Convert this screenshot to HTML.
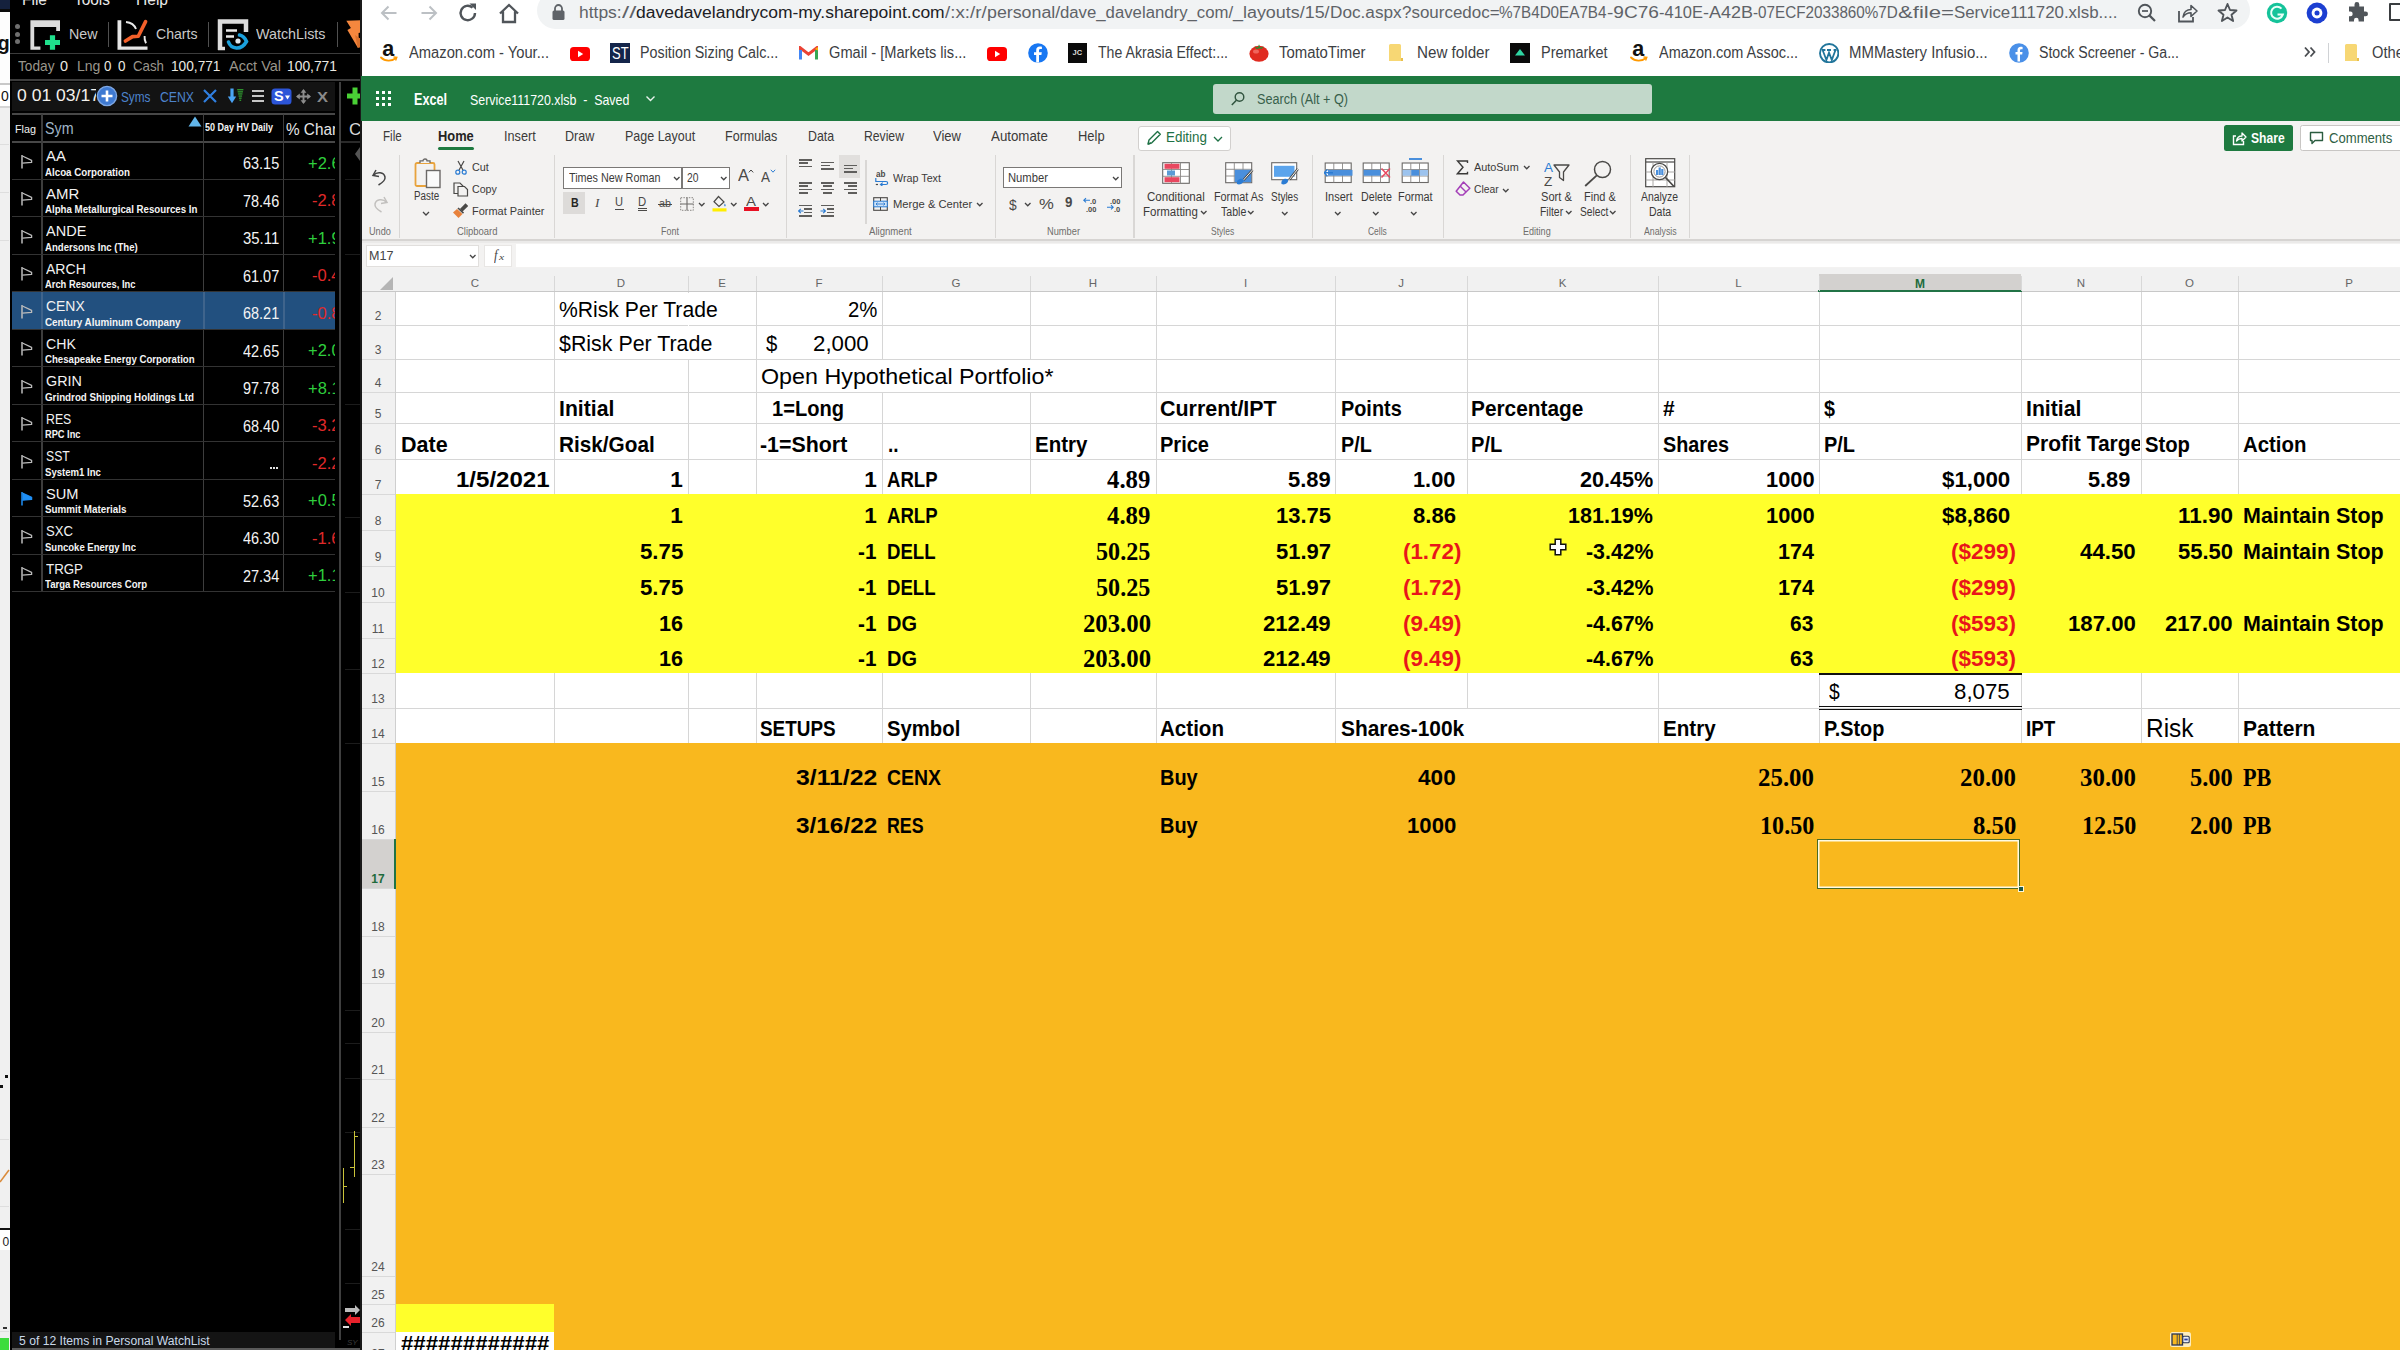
<!DOCTYPE html>
<html lang="en"><head><meta charset="utf-8"><title>Excel - Service111720.xlsb</title>
<style>
html,body{margin:0;padding:0;background:#fff}
#root{position:relative;width:2400px;height:1350px;overflow:hidden;background:#fff;font-family:"Liberation Sans",sans-serif}
#root div,#root svg,#root .t{position:absolute}
#root .t{white-space:pre;display:block;line-height:1;color:#000;font-family:"Liberation Sans",sans-serif}
#root .s{font-family:"Liberation Serif",serif}
</style></head><body><div id="root">
<div style="left:361px;top:268px;width:2039px;height:1082px;background:#fff;"></div>
<div style="left:396px;top:494px;width:2004px;height:179px;background:#ffff2b;"></div>
<div style="left:396px;top:743px;width:2004px;height:607px;background:#f9b81e;"></div>
<div style="left:396px;top:1304px;width:158px;height:28px;background:#ffff2b;"></div>
<div style="left:396px;top:1332px;width:158px;height:18px;background:#fff;"></div>
<div style="left:396px;top:325px;width:2004px;height:1px;background:#d6d6d6;"></div>
<div style="left:396px;top:359px;width:2004px;height:1px;background:#d6d6d6;"></div>
<div style="left:396px;top:392px;width:2004px;height:1px;background:#d6d6d6;"></div>
<div style="left:396px;top:423px;width:2004px;height:1px;background:#d6d6d6;"></div>
<div style="left:396px;top:459px;width:2004px;height:1px;background:#d6d6d6;"></div>
<div style="left:396px;top:708px;width:2004px;height:1px;background:#d6d6d6;"></div>
<div style="left:554px;top:292px;width:1px;height:202px;background:#d6d6d6;"></div>
<div style="left:554px;top:673px;width:1px;height:70px;background:#d6d6d6;"></div>
<div style="left:688px;top:292px;width:1px;height:202px;background:#d6d6d6;"></div>
<div style="left:688px;top:673px;width:1px;height:70px;background:#d6d6d6;"></div>
<div style="left:756px;top:292px;width:1px;height:202px;background:#d6d6d6;"></div>
<div style="left:756px;top:673px;width:1px;height:70px;background:#d6d6d6;"></div>
<div style="left:882px;top:292px;width:1px;height:202px;background:#d6d6d6;"></div>
<div style="left:882px;top:673px;width:1px;height:70px;background:#d6d6d6;"></div>
<div style="left:1030px;top:292px;width:1px;height:202px;background:#d6d6d6;"></div>
<div style="left:1030px;top:673px;width:1px;height:70px;background:#d6d6d6;"></div>
<div style="left:1156px;top:292px;width:1px;height:202px;background:#d6d6d6;"></div>
<div style="left:1156px;top:673px;width:1px;height:70px;background:#d6d6d6;"></div>
<div style="left:1335px;top:292px;width:1px;height:202px;background:#d6d6d6;"></div>
<div style="left:1335px;top:673px;width:1px;height:70px;background:#d6d6d6;"></div>
<div style="left:1467px;top:292px;width:1px;height:202px;background:#d6d6d6;"></div>
<div style="left:1467px;top:673px;width:1px;height:70px;background:#d6d6d6;"></div>
<div style="left:1658px;top:292px;width:1px;height:202px;background:#d6d6d6;"></div>
<div style="left:1658px;top:673px;width:1px;height:70px;background:#d6d6d6;"></div>
<div style="left:1819px;top:292px;width:1px;height:202px;background:#d6d6d6;"></div>
<div style="left:1819px;top:673px;width:1px;height:70px;background:#d6d6d6;"></div>
<div style="left:2021px;top:292px;width:1px;height:202px;background:#d6d6d6;"></div>
<div style="left:2021px;top:673px;width:1px;height:70px;background:#d6d6d6;"></div>
<div style="left:2141px;top:292px;width:1px;height:202px;background:#d6d6d6;"></div>
<div style="left:2141px;top:673px;width:1px;height:70px;background:#d6d6d6;"></div>
<div style="left:2238px;top:292px;width:1px;height:202px;background:#d6d6d6;"></div>
<div style="left:2238px;top:673px;width:1px;height:70px;background:#d6d6d6;"></div>
<div style="left:688px;top:293px;width:1px;height:66px;background:#fff;"></div>
<div style="left:882px;top:360px;width:1px;height:32px;background:#fff;"></div>
<div style="left:1030px;top:360px;width:1px;height:32px;background:#fff;"></div>
<div style="left:1467px;top:709px;width:1px;height:34px;background:#fff;"></div>
<div style="left:361px;top:268px;width:2039px;height:24px;background:#f1f1f1;"></div>
<div style="left:361px;top:291px;width:2039px;height:1px;background:#c8c8c8;"></div>
<div style="left:361px;top:292px;width:35px;height:1058px;background:#f1f1f1;"></div>
<div style="left:395px;top:292px;width:1px;height:1058px;background:#cfcfcf;"></div>
<div style="left:361px;top:325px;width:34px;height:1px;background:#d9d9d9;"></div>
<div style="left:361px;top:359px;width:34px;height:1px;background:#d9d9d9;"></div>
<div style="left:361px;top:392px;width:34px;height:1px;background:#d9d9d9;"></div>
<div style="left:361px;top:423px;width:34px;height:1px;background:#d9d9d9;"></div>
<div style="left:361px;top:459px;width:34px;height:1px;background:#d9d9d9;"></div>
<div style="left:361px;top:494px;width:34px;height:1px;background:#d9d9d9;"></div>
<div style="left:361px;top:530px;width:34px;height:1px;background:#d9d9d9;"></div>
<div style="left:361px;top:566px;width:34px;height:1px;background:#d9d9d9;"></div>
<div style="left:361px;top:602px;width:34px;height:1px;background:#d9d9d9;"></div>
<div style="left:361px;top:638px;width:34px;height:1px;background:#d9d9d9;"></div>
<div style="left:361px;top:673px;width:34px;height:1px;background:#d9d9d9;"></div>
<div style="left:361px;top:708px;width:34px;height:1px;background:#d9d9d9;"></div>
<div style="left:361px;top:743px;width:34px;height:1px;background:#d9d9d9;"></div>
<div style="left:361px;top:791px;width:34px;height:1px;background:#d9d9d9;"></div>
<div style="left:361px;top:839px;width:34px;height:1px;background:#d9d9d9;"></div>
<div style="left:361px;top:888px;width:34px;height:1px;background:#d9d9d9;"></div>
<div style="left:361px;top:936px;width:34px;height:1px;background:#d9d9d9;"></div>
<div style="left:361px;top:983px;width:34px;height:1px;background:#d9d9d9;"></div>
<div style="left:361px;top:1032px;width:34px;height:1px;background:#d9d9d9;"></div>
<div style="left:361px;top:1079px;width:34px;height:1px;background:#d9d9d9;"></div>
<div style="left:361px;top:1127px;width:34px;height:1px;background:#d9d9d9;"></div>
<div style="left:361px;top:1174px;width:34px;height:1px;background:#d9d9d9;"></div>
<div style="left:361px;top:1276px;width:34px;height:1px;background:#d9d9d9;"></div>
<div style="left:361px;top:1304px;width:34px;height:1px;background:#d9d9d9;"></div>
<div style="left:361px;top:1332px;width:34px;height:1px;background:#d9d9d9;"></div>
<div style="left:1819px;top:274px;width:202px;height:17px;background:#d3d1cf;"></div>
<div style="left:1818px;top:290px;width:204px;height:2px;background:#217346;"></div>
<div style="left:361px;top:840px;width:34px;height:48px;background:#d3d1cf;"></div>
<div style="left:394px;top:839px;width:2px;height:50px;background:#217346;"></div>
<div style="left:554px;top:276px;width:1px;height:15px;background:#d8d8d8;"></div>
<div style="left:688px;top:276px;width:1px;height:15px;background:#d8d8d8;"></div>
<div style="left:756px;top:276px;width:1px;height:15px;background:#d8d8d8;"></div>
<div style="left:882px;top:276px;width:1px;height:15px;background:#d8d8d8;"></div>
<div style="left:1030px;top:276px;width:1px;height:15px;background:#d8d8d8;"></div>
<div style="left:1156px;top:276px;width:1px;height:15px;background:#d8d8d8;"></div>
<div style="left:1335px;top:276px;width:1px;height:15px;background:#d8d8d8;"></div>
<div style="left:1467px;top:276px;width:1px;height:15px;background:#d8d8d8;"></div>
<div style="left:1658px;top:276px;width:1px;height:15px;background:#d8d8d8;"></div>
<div style="left:1819px;top:276px;width:1px;height:15px;background:#d8d8d8;"></div>
<div style="left:2021px;top:276px;width:1px;height:15px;background:#d8d8d8;"></div>
<div style="left:2141px;top:276px;width:1px;height:15px;background:#d8d8d8;"></div>
<div style="left:2238px;top:276px;width:1px;height:15px;background:#d8d8d8;"></div>
<svg style="left:378px;top:276px;" width="16" height="15" viewBox="0 0 16 15"><path d="M15 1 L15 14 L2 14 Z" fill="#b5b5b5"/></svg>
<span class="t" style="top:278.27px;font-size:11.5px;color:#666;left:-25.0px;width:1000px;text-align:center;">C</span>
<span class="t" style="top:278.27px;font-size:11.5px;color:#666;left:121.0px;width:1000px;text-align:center;">D</span>
<span class="t" style="top:278.27px;font-size:11.5px;color:#666;left:222.0px;width:1000px;text-align:center;">E</span>
<span class="t" style="top:278.27px;font-size:11.5px;color:#666;left:319.0px;width:1000px;text-align:center;">F</span>
<span class="t" style="top:278.27px;font-size:11.5px;color:#666;left:456.0px;width:1000px;text-align:center;">G</span>
<span class="t" style="top:278.27px;font-size:11.5px;color:#666;left:593.0px;width:1000px;text-align:center;">H</span>
<span class="t" style="top:278.27px;font-size:11.5px;color:#666;left:745.5px;width:1000px;text-align:center;">I</span>
<span class="t" style="top:278.27px;font-size:11.5px;color:#666;left:901.0px;width:1000px;text-align:center;">J</span>
<span class="t" style="top:278.27px;font-size:11.5px;color:#666;left:1062.5px;width:1000px;text-align:center;">K</span>
<span class="t" style="top:278.27px;font-size:11.5px;color:#666;left:1238.5px;width:1000px;text-align:center;">L</span>
<span class="t" style="top:277.84px;font-size:12px;font-weight:700;color:#1e6b3c;left:1420.0px;width:1000px;text-align:center;">M</span>
<span class="t" style="top:278.27px;font-size:11.5px;color:#666;left:1581.0px;width:1000px;text-align:center;">N</span>
<span class="t" style="top:278.27px;font-size:11.5px;color:#666;left:1689.5px;width:1000px;text-align:center;">O</span>
<span class="t" style="top:278.27px;font-size:11.5px;color:#666;left:1849.0px;width:1000px;text-align:center;">P</span>
<span class="t" style="top:309.84px;font-size:12px;color:#555;left:-122px;width:1000px;text-align:center;">2</span>
<span class="t" style="top:343.84px;font-size:12px;color:#555;left:-122px;width:1000px;text-align:center;">3</span>
<span class="t" style="top:376.84px;font-size:12px;color:#555;left:-122px;width:1000px;text-align:center;">4</span>
<span class="t" style="top:407.84px;font-size:12px;color:#555;left:-122px;width:1000px;text-align:center;">5</span>
<span class="t" style="top:443.84px;font-size:12px;color:#555;left:-122px;width:1000px;text-align:center;">6</span>
<span class="t" style="top:478.84px;font-size:12px;color:#555;left:-122px;width:1000px;text-align:center;">7</span>
<span class="t" style="top:514.84px;font-size:12px;color:#555;left:-122px;width:1000px;text-align:center;">8</span>
<span class="t" style="top:550.84px;font-size:12px;color:#555;left:-122px;width:1000px;text-align:center;">9</span>
<span class="t" style="top:586.84px;font-size:12px;color:#555;left:-122px;width:1000px;text-align:center;">10</span>
<span class="t" style="top:622.84px;font-size:12px;color:#555;left:-122px;width:1000px;text-align:center;">11</span>
<span class="t" style="top:657.84px;font-size:12px;color:#555;left:-122px;width:1000px;text-align:center;">12</span>
<span class="t" style="top:692.84px;font-size:12px;color:#555;left:-122px;width:1000px;text-align:center;">13</span>
<span class="t" style="top:727.84px;font-size:12px;color:#555;left:-122px;width:1000px;text-align:center;">14</span>
<span class="t" style="top:775.84px;font-size:12px;color:#555;left:-122px;width:1000px;text-align:center;">15</span>
<span class="t" style="top:823.84px;font-size:12px;color:#555;left:-122px;width:1000px;text-align:center;">16</span>
<span class="t" style="top:872.84px;font-size:12px;font-weight:700;color:#1e6b3c;left:-122px;width:1000px;text-align:center;">17</span>
<span class="t" style="top:920.84px;font-size:12px;color:#555;left:-122px;width:1000px;text-align:center;">18</span>
<span class="t" style="top:967.84px;font-size:12px;color:#555;left:-122px;width:1000px;text-align:center;">19</span>
<span class="t" style="top:1016.84px;font-size:12px;color:#555;left:-122px;width:1000px;text-align:center;">20</span>
<span class="t" style="top:1063.84px;font-size:12px;color:#555;left:-122px;width:1000px;text-align:center;">21</span>
<span class="t" style="top:1111.84px;font-size:12px;color:#555;left:-122px;width:1000px;text-align:center;">22</span>
<span class="t" style="top:1158.84px;font-size:12px;color:#555;left:-122px;width:1000px;text-align:center;">23</span>
<span class="t" style="top:1260.84px;font-size:12px;color:#555;left:-122px;width:1000px;text-align:center;">24</span>
<span class="t" style="top:1288.84px;font-size:12px;color:#555;left:-122px;width:1000px;text-align:center;">25</span>
<span class="t" style="top:1316.84px;font-size:12px;color:#555;left:-122px;width:1000px;text-align:center;">26</span>
<span class="t" style="top:1347.84px;font-size:12px;color:#555;left:-122px;width:1000px;text-align:center;">27</span>
<div style="left:1819px;top:673px;width:203px;height:2px;background:#111;"></div>
<div style="left:1819px;top:706px;width:203px;height:1px;background:#111;"></div>
<div style="left:1819px;top:709px;width:203px;height:1px;background:#111;"></div>
<div style="left:1817.3px;top:838.6px;width:203.2px;height:50.2px;border:1.5px solid #4a6b25;box-sizing:border-box;box-shadow:inset 0 0 0 1.5px #fffbe4"></div>
<div style="left:2017.8px;top:885.8px;width:6px;height:6px;background:#1e5a4a;border:1.2px solid #fff6d8;box-sizing:border-box"></div>
<svg style="left:2169px;top:1331px;" width="23" height="17" viewBox="0 0 23 17"><rect x="1" y="1" width="21" height="15" rx="2.5" fill="#fdf3d0" opacity="0.9"/><rect x="3" y="3" width="10.5" height="11" fill="#f9b81e" stroke="#2b3550" stroke-width="1.3"/><path d="M8.2 3 V14 M10.4 3 V14" stroke="#2b3550" stroke-width="0.8"/><rect x="13.8" y="5.2" width="6.4" height="6.6" rx="1" fill="#e9edf7" stroke="#2b3550" stroke-width="1.1"/><rect x="15.3" y="7.6" width="3.4" height="1.8" fill="#2b3ea0"/></svg>
<svg style="left:1549px;top:538px;" width="18" height="18" viewBox="0 0 18 18"><path d="M6.2 1.2 H11.8 V6.2 H16.8 V11.8 H11.8 V16.8 H6.2 V11.8 H1.2 V6.2 H6.2 Z" fill="#fff" stroke="#111" stroke-width="1.5" stroke-linejoin="miter"/></svg>
<span class="t" style="top:298.77px;font-size:22.6px;left:559.0px;transform:scaleX(0.936);transform-origin:0 0;">%Risk Per Trade</span>
<span class="t" style="top:298.77px;font-size:22.6px;left:848.3px;transform:scaleX(0.9003);transform-origin:0 0;">2%</span>
<span class="t" style="top:333.27px;font-size:22.6px;left:559.0px;transform:scaleX(0.9462);transform-origin:0 0;">$Risk Per Trade</span>
<span class="t" style="top:333.27px;font-size:22.6px;left:766.0px;transform:scaleX(0.8993);transform-origin:0 0;">$</span>
<span class="t" style="top:333.27px;font-size:22.6px;left:813.3px;transform:scaleX(0.9851);transform-origin:0 0;">2,000</span>
<span class="t" style="top:366.27px;font-size:22.6px;left:760.7px;transform:scaleX(1.0306);transform-origin:0 0;">Open Hypothetical Portfolio*</span>
<span class="t" style="top:398.27px;font-size:22.6px;font-weight:700;left:559.0px;transform:scaleX(0.9372);transform-origin:0 0;">Initial</span>
<span class="t" style="top:398.27px;font-size:22.6px;font-weight:700;left:772.3px;transform:scaleX(0.8889);transform-origin:0 0;">1=Long</span>
<span class="t" style="top:398.27px;font-size:22.6px;font-weight:700;left:1160.0px;transform:scaleX(0.9483);transform-origin:0 0;">Current/IPT</span>
<span class="t" style="top:398.27px;font-size:22.6px;font-weight:700;left:1341.0px;transform:scaleX(0.8789);transform-origin:0 0;">Points</span>
<span class="t" style="top:398.27px;font-size:22.6px;font-weight:700;left:1471.0px;transform:scaleX(0.9216);transform-origin:0 0;">Percentage</span>
<span class="t" style="top:398.27px;font-size:22.6px;font-weight:700;left:1663.3px;transform:scaleX(0.9311);transform-origin:0 0;">#</span>
<span class="t" style="top:398.27px;font-size:22.6px;font-weight:700;left:1824.0px;transform:scaleX(0.8754);transform-origin:0 0;">$</span>
<span class="t" style="top:398.27px;font-size:22.6px;font-weight:700;left:2025.7px;transform:scaleX(0.9372);transform-origin:0 0;">Initial</span>
<span class="t" style="top:434.27px;font-size:22.6px;font-weight:700;left:400.7px;transform:scaleX(0.9511);transform-origin:0 0;">Date</span>
<span class="t" style="top:434.27px;font-size:22.6px;font-weight:700;left:559.0px;transform:scaleX(0.918);transform-origin:0 0;">Risk/Goal</span>
<span class="t" style="top:434.27px;font-size:22.6px;font-weight:700;left:760.0px;transform:scaleX(0.9458);transform-origin:0 0;">-1=Short</span>
<span class="t" style="top:434.27px;font-size:22.6px;font-weight:700;left:887.7px;transform:scaleX(0.8436);transform-origin:0 0;">..</span>
<span class="t" style="top:434.27px;font-size:22.6px;font-weight:700;left:1035.3px;transform:scaleX(0.9071);transform-origin:0 0;">Entry</span>
<span class="t" style="top:434.27px;font-size:22.6px;font-weight:700;left:1160.0px;transform:scaleX(0.8864);transform-origin:0 0;">Price</span>
<span class="t" style="top:434.27px;font-size:22.6px;font-weight:700;left:1341.0px;transform:scaleX(0.873);transform-origin:0 0;">P/L</span>
<span class="t" style="top:434.27px;font-size:22.6px;font-weight:700;left:1471.0px;transform:scaleX(0.8901);transform-origin:0 0;">P/L</span>
<span class="t" style="top:434.27px;font-size:22.6px;font-weight:700;left:1663.3px;transform:scaleX(0.8757);transform-origin:0 0;">Shares</span>
<span class="t" style="top:434.27px;font-size:22.6px;font-weight:700;left:1824.0px;transform:scaleX(0.8815);transform-origin:0 0;">P/L</span>
<div style="left:2022px;top:425px;width:118px;height:34px;overflow:hidden">
<span class="t" style="top:8.37px;font-size:22.6px;font-weight:700;left:3.7px;transform:scaleX(0.9293);transform-origin:0 0;">Profit Target</span>
</div>
<span class="t" style="top:434.27px;font-size:22.6px;font-weight:700;left:2145.0px;transform:scaleX(0.8961);transform-origin:0 0;">Stop</span>
<span class="t" style="top:434.27px;font-size:22.6px;font-weight:700;left:2243.3px;transform:scaleX(0.9017);transform-origin:0 0;">Action</span>
<span class="t" style="top:469.27px;font-size:22.6px;font-weight:700;left:455.7px;transform:scaleX(1.0639);transform-origin:0 0;">1/5/2021</span>
<span class="t" style="top:469.27px;font-size:22.6px;font-weight:700;left:670.13px;">1</span>
<span class="t" style="top:469.27px;font-size:22.6px;font-weight:700;left:864.13px;">1</span>
<span class="t" style="top:469.27px;font-size:22.6px;font-weight:700;left:886.7px;transform:scaleX(0.8225);transform-origin:0 0;">ARLP</span>
<span class="t s" style="top:467.46px;font-size:25px;font-weight:700;left:1107.3px;transform:scaleX(0.992);transform-origin:0 0;">4.89</span>
<span class="t" style="top:469.27px;font-size:22.6px;font-weight:700;left:1288.3px;transform:scaleX(0.9709);transform-origin:0 0;">5.89</span>
<span class="t" style="top:469.27px;font-size:22.6px;font-weight:700;left:1413.3px;transform:scaleX(0.9641);transform-origin:0 0;">1.00</span>
<span class="t" style="top:469.27px;font-size:22.6px;font-weight:700;left:1580.0px;transform:scaleX(0.9562);transform-origin:0 0;">20.45%</span>
<span class="t" style="top:469.27px;font-size:22.6px;font-weight:700;left:1765.7px;transform:scaleX(0.9665);transform-origin:0 0;">1000</span>
<span class="t" style="top:469.27px;font-size:22.6px;font-weight:700;left:1941.7px;transform:scaleX(0.9879);transform-origin:0 0;">$1,000</span>
<span class="t" style="top:469.27px;font-size:22.6px;font-weight:700;left:2087.7px;transform:scaleX(0.9618);transform-origin:0 0;">5.89</span>
<span class="t" style="top:505.27px;font-size:22.6px;font-weight:700;left:670.13px;">1</span>
<span class="t" style="top:505.27px;font-size:22.6px;font-weight:700;left:864.13px;">1</span>
<span class="t" style="top:505.27px;font-size:22.6px;font-weight:700;left:886.7px;transform:scaleX(0.8225);transform-origin:0 0;">ARLP</span>
<span class="t s" style="top:503.46px;font-size:25px;font-weight:700;left:1107.3px;transform:scaleX(0.992);transform-origin:0 0;">4.89</span>
<span class="t" style="top:505.27px;font-size:22.6px;font-weight:700;left:1276.0px;transform:scaleX(0.9727);transform-origin:0 0;">13.75</span>
<span class="t" style="top:505.27px;font-size:22.6px;font-weight:700;left:1412.7px;transform:scaleX(0.9777);transform-origin:0 0;">8.86</span>
<span class="t" style="top:505.27px;font-size:22.6px;font-weight:700;left:1568.3px;transform:scaleX(0.9526);transform-origin:0 0;">181.19%</span>
<span class="t" style="top:505.27px;font-size:22.6px;font-weight:700;left:1765.7px;transform:scaleX(0.9665);transform-origin:0 0;">1000</span>
<span class="t" style="top:505.27px;font-size:22.6px;font-weight:700;left:1941.7px;transform:scaleX(0.9879);transform-origin:0 0;">$8,860</span>
<span class="t" style="top:505.27px;font-size:22.6px;font-weight:700;left:2177.7px;transform:scaleX(0.9945);transform-origin:0 0;">11.90</span>
<span class="t" style="top:505.27px;font-size:22.6px;font-weight:700;left:2243.3px;transform:scaleX(0.9498);transform-origin:0 0;">Maintain Stop</span>
<span class="t" style="top:541.27px;font-size:22.6px;font-weight:700;left:640.0px;transform:scaleX(0.9845);transform-origin:0 0;">5.75</span>
<span class="t" style="top:541.27px;font-size:22.6px;font-weight:700;left:858.3px;transform:scaleX(0.9158);transform-origin:0 0;">-1</span>
<span class="t" style="top:541.27px;font-size:22.6px;font-weight:700;left:886.7px;transform:scaleX(0.8236);transform-origin:0 0;">DELL</span>
<span class="t s" style="top:539.46px;font-size:25px;font-weight:700;left:1095.7px;transform:scaleX(0.9653);transform-origin:0 0;">50.25</span>
<span class="t" style="top:541.27px;font-size:22.6px;font-weight:700;left:1276.0px;transform:scaleX(0.9727);transform-origin:0 0;">51.97</span>
<span class="t" style="top:541.27px;font-size:22.6px;font-weight:700;color:#e8161a;left:1403.3px;transform:scaleX(0.9893);transform-origin:0 0;">(1.72)</span>
<span class="t" style="top:541.27px;font-size:22.6px;font-weight:700;left:1585.7px;transform:scaleX(0.9442);transform-origin:0 0;">-3.42%</span>
<span class="t" style="top:541.27px;font-size:22.6px;font-weight:700;left:1778.3px;transform:scaleX(0.955);transform-origin:0 0;">174</span>
<span class="t" style="top:541.27px;font-size:22.6px;font-weight:700;color:#e8161a;left:1950.7px;transform:scaleX(0.9948);transform-origin:0 0;">($299)</span>
<span class="t" style="top:577.27px;font-size:22.6px;font-weight:700;left:640.0px;transform:scaleX(0.9845);transform-origin:0 0;">5.75</span>
<span class="t" style="top:577.27px;font-size:22.6px;font-weight:700;left:858.3px;transform:scaleX(0.9158);transform-origin:0 0;">-1</span>
<span class="t" style="top:577.27px;font-size:22.6px;font-weight:700;left:886.7px;transform:scaleX(0.8236);transform-origin:0 0;">DELL</span>
<span class="t s" style="top:575.46px;font-size:25px;font-weight:700;left:1095.7px;transform:scaleX(0.9653);transform-origin:0 0;">50.25</span>
<span class="t" style="top:577.27px;font-size:22.6px;font-weight:700;left:1276.0px;transform:scaleX(0.9727);transform-origin:0 0;">51.97</span>
<span class="t" style="top:577.27px;font-size:22.6px;font-weight:700;color:#e8161a;left:1403.3px;transform:scaleX(0.9893);transform-origin:0 0;">(1.72)</span>
<span class="t" style="top:577.27px;font-size:22.6px;font-weight:700;left:1585.7px;transform:scaleX(0.9442);transform-origin:0 0;">-3.42%</span>
<span class="t" style="top:577.27px;font-size:22.6px;font-weight:700;left:1778.3px;transform:scaleX(0.955);transform-origin:0 0;">174</span>
<span class="t" style="top:577.27px;font-size:22.6px;font-weight:700;color:#e8161a;left:1950.7px;transform:scaleX(0.9948);transform-origin:0 0;">($299)</span>
<span class="t" style="top:541.27px;font-size:22.6px;font-weight:700;left:2080.0px;transform:scaleX(0.9851);transform-origin:0 0;">44.50</span>
<span class="t" style="top:541.27px;font-size:22.6px;font-weight:700;left:2177.7px;transform:scaleX(0.9727);transform-origin:0 0;">55.50</span>
<span class="t" style="top:541.27px;font-size:22.6px;font-weight:700;left:2243.3px;transform:scaleX(0.9498);transform-origin:0 0;">Maintain Stop</span>
<span class="t" style="top:613.27px;font-size:22.6px;font-weight:700;left:659.3px;transform:scaleX(0.955);transform-origin:0 0;">16</span>
<span class="t" style="top:613.27px;font-size:22.6px;font-weight:700;left:858.3px;transform:scaleX(0.9158);transform-origin:0 0;">-1</span>
<span class="t" style="top:613.27px;font-size:22.6px;font-weight:700;left:886.7px;transform:scaleX(0.885);transform-origin:0 0;">DG</span>
<span class="t s" style="top:611.46px;font-size:25px;font-weight:700;left:1082.7px;transform:scaleX(0.9891);transform-origin:0 0;">203.00</span>
<span class="t" style="top:613.27px;font-size:22.6px;font-weight:700;left:1263.3px;transform:scaleX(0.9793);transform-origin:0 0;">212.49</span>
<span class="t" style="top:613.27px;font-size:22.6px;font-weight:700;color:#e8161a;left:1403.3px;transform:scaleX(0.9893);transform-origin:0 0;">(9.49)</span>
<span class="t" style="top:613.27px;font-size:22.6px;font-weight:700;left:1585.7px;transform:scaleX(0.9442);transform-origin:0 0;">-4.67%</span>
<span class="t" style="top:613.27px;font-size:22.6px;font-weight:700;left:1790.0px;transform:scaleX(0.9271);transform-origin:0 0;">63</span>
<span class="t" style="top:613.27px;font-size:22.6px;font-weight:700;color:#e8161a;left:1950.7px;transform:scaleX(0.9948);transform-origin:0 0;">($593)</span>
<span class="t" style="top:648.27px;font-size:22.6px;font-weight:700;left:659.3px;transform:scaleX(0.955);transform-origin:0 0;">16</span>
<span class="t" style="top:648.27px;font-size:22.6px;font-weight:700;left:858.3px;transform:scaleX(0.9158);transform-origin:0 0;">-1</span>
<span class="t" style="top:648.27px;font-size:22.6px;font-weight:700;left:886.7px;transform:scaleX(0.885);transform-origin:0 0;">DG</span>
<span class="t s" style="top:646.46px;font-size:25px;font-weight:700;left:1082.7px;transform:scaleX(0.9891);transform-origin:0 0;">203.00</span>
<span class="t" style="top:648.27px;font-size:22.6px;font-weight:700;left:1263.3px;transform:scaleX(0.9793);transform-origin:0 0;">212.49</span>
<span class="t" style="top:648.27px;font-size:22.6px;font-weight:700;color:#e8161a;left:1403.3px;transform:scaleX(0.9893);transform-origin:0 0;">(9.49)</span>
<span class="t" style="top:648.27px;font-size:22.6px;font-weight:700;left:1585.7px;transform:scaleX(0.9442);transform-origin:0 0;">-4.67%</span>
<span class="t" style="top:648.27px;font-size:22.6px;font-weight:700;left:1790.0px;transform:scaleX(0.9271);transform-origin:0 0;">63</span>
<span class="t" style="top:648.27px;font-size:22.6px;font-weight:700;color:#e8161a;left:1950.7px;transform:scaleX(0.9948);transform-origin:0 0;">($593)</span>
<span class="t" style="top:613.27px;font-size:22.6px;font-weight:700;left:2067.7px;transform:scaleX(0.9836);transform-origin:0 0;">187.00</span>
<span class="t" style="top:613.27px;font-size:22.6px;font-weight:700;left:2165.0px;transform:scaleX(0.9793);transform-origin:0 0;">217.00</span>
<span class="t" style="top:613.27px;font-size:22.6px;font-weight:700;left:2243.3px;transform:scaleX(0.9498);transform-origin:0 0;">Maintain Stop</span>
<span class="t" style="top:681.27px;font-size:22.6px;left:1829.3px;transform:scaleX(0.8515);transform-origin:0 0;">$</span>
<span class="t" style="top:681.27px;font-size:22.6px;left:1954.3px;transform:scaleX(0.9851);transform-origin:0 0;">8,075</span>
<span class="t" style="top:718.27px;font-size:22.6px;font-weight:700;left:760.0px;transform:scaleX(0.8372);transform-origin:0 0;">SETUPS</span>
<span class="t" style="top:718.27px;font-size:22.6px;font-weight:700;left:886.7px;transform:scaleX(0.8979);transform-origin:0 0;">Symbol</span>
<span class="t" style="top:718.27px;font-size:22.6px;font-weight:700;left:1160.0px;transform:scaleX(0.9103);transform-origin:0 0;">Action</span>
<span class="t" style="top:718.27px;font-size:22.6px;font-weight:700;left:1340.7px;transform:scaleX(0.9255);transform-origin:0 0;">Shares-100k</span>
<span class="t" style="top:718.27px;font-size:22.6px;font-weight:700;left:1663.3px;transform:scaleX(0.9123);transform-origin:0 0;">Entry</span>
<span class="t" style="top:718.27px;font-size:22.6px;font-weight:700;left:1824.0px;transform:scaleX(0.8783);transform-origin:0 0;">P.Stop</span>
<span class="t" style="top:718.27px;font-size:22.6px;font-weight:700;left:2025.7px;transform:scaleX(0.8332);transform-origin:0 0;">IPT</span>
<span class="t" style="top:715.39px;font-size:26px;left:2145.7px;transform:scaleX(0.9408);transform-origin:0 0;">Risk</span>
<span class="t" style="top:718.27px;font-size:22.6px;font-weight:700;left:2243.3px;transform:scaleX(0.9299);transform-origin:0 0;">Pattern</span>
<span class="t" style="top:767.27px;font-size:22.6px;font-weight:700;left:796.0px;transform:scaleX(1.0964);transform-origin:0 0;">3/11/22</span>
<span class="t" style="top:767.27px;font-size:22.6px;font-weight:700;left:886.7px;transform:scaleX(0.8601);transform-origin:0 0;">CENX</span>
<span class="t" style="top:767.27px;font-size:22.6px;font-weight:700;left:1160.0px;transform:scaleX(0.8831);transform-origin:0 0;">Buy</span>
<span class="t" style="top:767.27px;font-size:22.6px;font-weight:700;left:1418.3px;transform:scaleX(1.0001);transform-origin:0 0;">400</span>
<span class="t s" style="top:765.46px;font-size:25px;font-weight:700;left:1758.3px;transform:scaleX(0.9956);transform-origin:0 0;">25.00</span>
<span class="t s" style="top:765.46px;font-size:25px;font-weight:700;left:1960.0px;transform:scaleX(0.9956);transform-origin:0 0;">20.00</span>
<span class="t s" style="top:765.46px;font-size:25px;font-weight:700;left:2080.0px;transform:scaleX(0.9956);transform-origin:0 0;">30.00</span>
<span class="t s" style="top:765.46px;font-size:25px;font-weight:700;left:2190.0px;transform:scaleX(0.976);transform-origin:0 0;">5.00</span>
<span class="t s" style="top:765.46px;font-size:25px;font-weight:700;left:2243.3px;transform:scaleX(0.8889);transform-origin:0 0;">PB</span>
<span class="t" style="top:814.77px;font-size:22.6px;font-weight:700;left:796.0px;transform:scaleX(1.0783);transform-origin:0 0;">3/16/22</span>
<span class="t" style="top:814.77px;font-size:22.6px;font-weight:700;left:886.7px;transform:scaleX(0.7877);transform-origin:0 0;">RES</span>
<span class="t" style="top:814.77px;font-size:22.6px;font-weight:700;left:1160.0px;transform:scaleX(0.8831);transform-origin:0 0;">Buy</span>
<span class="t" style="top:814.77px;font-size:22.6px;font-weight:700;left:1406.7px;transform:scaleX(0.9804);transform-origin:0 0;">1000</span>
<span class="t s" style="top:812.96px;font-size:25px;font-weight:700;left:1760.0px;transform:scaleX(0.9653);transform-origin:0 0;">10.50</span>
<span class="t s" style="top:812.96px;font-size:25px;font-weight:700;left:1972.7px;transform:scaleX(0.9897);transform-origin:0 0;">8.50</span>
<span class="t s" style="top:812.96px;font-size:25px;font-weight:700;left:2081.7px;transform:scaleX(0.9653);transform-origin:0 0;">12.50</span>
<span class="t s" style="top:812.96px;font-size:25px;font-weight:700;left:2190.0px;transform:scaleX(0.976);transform-origin:0 0;">2.00</span>
<span class="t s" style="top:812.96px;font-size:25px;font-weight:700;left:2243.3px;transform:scaleX(0.8889);transform-origin:0 0;">PB</span>
<div style="left:396px;top:1333px;width:158px;height:17px;overflow:hidden">
<span class="t" style="top:-0.13px;font-size:22.6px;font-weight:700;left:4.5px;transform:scaleX(0.9845);transform-origin:0 0;">############</span>
</div>
<div style="left:0px;top:0px;width:10px;height:1350px;background:#f0f0f0;"></div>
<div style="left:0px;top:0px;width:10px;height:9px;background:#15213d;"></div>
<div style="left:0px;top:9px;width:10px;height:3px;background:#0b0b0b;"></div>
<div style="left:0px;top:12px;width:10px;height:71px;background:#fdfdfd;"></div>
<div style="left:0px;top:83px;width:10px;height:2px;background:#c9c9c9;"></div>
<div style="left:0px;top:85px;width:10px;height:21px;background:#fff;"></div>
<div style="left:0px;top:106px;width:10px;height:2px;background:#d5d5d5;"></div>
<div style="left:0;top:0;width:10px;height:1350px;overflow:hidden">
<span class="t" style="top:33.37px;font-size:20px;font-weight:700;color:#111;left:-2.5px;">g</span>
<span class="t" style="top:89.15px;font-size:14px;color:#111;left:1px;">0</span>
<div style="left:0px;top:1228px;width:10px;height:2px;background:#111;"></div>
<div style="left:0px;top:1230px;width:10px;height:20px;background:#fff;"></div>
<span class="t" style="top:1235.84px;font-size:12px;color:#222;left:2.5px;">0</span>
<div style="left:5px;top:1075px;width:3px;height:3px;background:#111;"></div>
<div style="left:0px;top:1085px;width:3px;height:3px;background:#111;"></div>
<div style="left:3px;top:1327px;width:4px;height:2px;background:#333;"></div>
<div style="left:0px;top:1338px;width:9px;height:12px;background:#3ddc3d;"></div>
</div>
<svg style="left:0px;top:1165px;" width="10" height="22" viewBox="0 0 10 22"><path d="M0 17 L9 5" stroke="#d98a3a" stroke-width="1.6" fill="none"/></svg>
<div style="left:0px;top:144px;width:9px;height:1px;background:#dedede;"></div>
<div style="left:0px;top:192px;width:9px;height:1px;background:#dedede;"></div>
<div style="left:0px;top:240px;width:9px;height:1px;background:#dedede;"></div>
<div style="left:0px;top:1139px;width:9px;height:1px;background:#dedede;"></div>
<div style="left:0px;top:1206px;width:9px;height:1px;background:#dedede;"></div>
<div style="left:0px;top:1331px;width:9px;height:1px;background:#dedede;"></div>
<div style="left:10px;top:0px;width:351px;height:1350px;background:#000;"></div>
<div style="left:10px;top:0;width:351px;height:14px;overflow:hidden">
<span class="t" style="top:-8.04px;font-size:16px;color:#e9e9e9;left:12.0px;transform:scaleX(0.9699);transform-origin:0 0;">File</span>
<span class="t" style="top:-8.04px;font-size:16px;color:#e9e9e9;left:64.0px;transform:scaleX(0.964);transform-origin:0 0;">Tools</span>
<span class="t" style="top:-8.04px;font-size:16px;color:#e9e9e9;left:126.0px;transform:scaleX(0.9723);transform-origin:0 0;">Help</span>
</div>
<div style="left:14.5px;top:24.4px;width:5px;height:5px;border-radius:3px;background:#6f6f6f"></div>
<div style="left:14.5px;top:31.9px;width:5px;height:5px;border-radius:3px;background:#6f6f6f"></div>
<div style="left:14.5px;top:39.4px;width:5px;height:5px;border-radius:3px;background:#6f6f6f"></div>
<svg style="left:29px;top:19px;" width="34" height="34" viewBox="0 0 34 34"><path d="M1.4 1.3 H31 V12 H27.2 V7.9 H5.2 V27.5 H11.4 V30.8 H1.4 Z" fill="#dcdcdc"/><path d="M23.5 16.3 V30.8 M16 23.5 H31" stroke="#1fe08c" stroke-width="5.2"/></svg>
<span class="t" style="top:27.34px;font-size:14.6px;color:#c9c9c9;left:68.5px;transform:scaleX(0.9746);transform-origin:0 0;">New</span>
<div style="left:107.7px;top:21.5px;width:1.3px;height:25.5px;background:#505050;"></div>
<svg style="left:115px;top:18px;" width="36" height="34" viewBox="0 0 36 34"><path d="M2.5 2.3 H6.3 V28.5 H32.5 V31.8 H2.5 Z" fill="#e6e6e6"/><path d="M11 4 C15.5 4.5 19.5 7 21 11" stroke="#e8e8e8" stroke-width="1.9" fill="none"/><path d="M29.6 18 C29.3 21 29.8 23 31 25.2" stroke="#e8e8e8" stroke-width="1.9" fill="none"/><path d="M10.4 23 L17.5 18.6 L23.3 18.2 L30.6 3.6" stroke="#f4602a" stroke-width="3.6" fill="none" stroke-linejoin="round" stroke-linecap="round"/></svg>
<span class="t" style="top:27.34px;font-size:14.6px;color:#c9c9c9;left:155.5px;transform:scaleX(0.9652);transform-origin:0 0;">Charts</span>
<div style="left:207.7px;top:21.5px;width:1.3px;height:25.5px;background:#505050;"></div>
<svg style="left:216px;top:18px;" width="36" height="34" viewBox="0 0 36 34"><path d="M4 32 V3.5 H30 V14" stroke="#dcdcdc" stroke-width="4.5" fill="none"/><path d="M2 30.5 H9" stroke="#dcdcdc" stroke-width="3.5"/><path d="M10 12.5 H21 M10 18.5 H18" stroke="#e8e8e8" stroke-width="2.6"/><path d="M12.5 24 C15 31 25 33 30.5 23.5 C29 20 26 17.5 23.5 17" stroke="#1aa0dc" stroke-width="3.6" fill="none" stroke-linecap="round"/><circle cx="22" cy="23" r="2.6" fill="#dfe9f0"/></svg>
<span class="t" style="top:27.34px;font-size:14.6px;color:#c9c9c9;left:255.5px;transform:scaleX(0.9809);transform-origin:0 0;">WatchLists</span>
<div style="left:336.7px;top:21.5px;width:1.3px;height:25.5px;background:#505050;"></div>
<svg style="left:343px;top:18px;" width="18" height="34" viewBox="0 0 18 34"><path d="M3.3 2.7 L17.6 2.3 V14.5 L15.6 15 V20 L17.6 20.4 V29 L14.8 29.7 L4.4 11.9 L7.9 9.9 Z" fill="#f5873e"/><path d="M12 17 L17.6 21 V29 L14.8 29.7 Z" fill="#d9702c"/></svg>
<div style="left:10px;top:52.5px;width:351px;height:1.5px;background:#3c3c3c;"></div>
<span class="t" style="top:59.17px;font-size:14.8px;color:#9a968c;left:18.2px;transform:scaleX(0.9244);transform-origin:0 0;">Today</span>
<span class="t" style="top:59.17px;font-size:14.8px;color:#ebe9e2;left:59.8px;transform:scaleX(0.9722);transform-origin:0 0;">0</span>
<span class="t" style="top:59.17px;font-size:14.8px;color:#9a968c;left:76.6px;transform:scaleX(0.9479);transform-origin:0 0;">Lng</span>
<span class="t" style="top:59.17px;font-size:14.8px;color:#ebe9e2;left:103.6px;transform:scaleX(0.8993);transform-origin:0 0;">0</span>
<span class="t" style="top:59.17px;font-size:14.8px;color:#ebe9e2;left:117.5px;transform:scaleX(0.9114);transform-origin:0 0;">0</span>
<span class="t" style="top:59.17px;font-size:14.8px;color:#9a968c;left:133.0px;transform:scaleX(0.8974);transform-origin:0 0;">Cash</span>
<span class="t" style="top:59.17px;font-size:14.8px;color:#ebe9e2;left:171.0px;transform:scaleX(0.9252);transform-origin:0 0;">100,771</span>
<span class="t" style="top:59.17px;font-size:14.8px;color:#9a968c;left:229.0px;transform:scaleX(0.9776);transform-origin:0 0;">Acct Val</span>
<span class="t" style="top:59.17px;font-size:14.8px;color:#ebe9e2;left:287.0px;transform:scaleX(0.9345);transform-origin:0 0;">100,771</span>
<div style="left:10px;top:79px;width:351px;height:1.5px;background:#3c3c3c;"></div>
<div style="left:12px;top:82px;width:323px;height:29px;background:#131313;"></div>
<div style="left:12px;top:82px;width:84px;height:29px;overflow:hidden">
<span class="t" style="top:5.17px;font-size:17.4px;color:#f3f1ec;left:5.0px;transform:scaleX(1.0091);transform-origin:0 0;">0 01 03/17</span>
</div>
<svg style="left:96px;top:85px;" width="22" height="22" viewBox="0 0 22 22"><circle cx="11" cy="11" r="9.6" fill="#3f7ad2" stroke="#7fa8e4" stroke-width="1.4"/><path d="M11 5.5 V16.5 M5.5 11 H16.5" stroke="#fff" stroke-width="2.6"/></svg>
<span class="t" style="top:88.60px;font-size:15px;color:#4d83cc;left:120.5px;transform:scaleX(0.7867);transform-origin:0 0;">Syms</span>
<span class="t" style="top:88.60px;font-size:15px;color:#4d83cc;left:160.0px;transform:scaleX(0.8159);transform-origin:0 0;">CENX</span>
<svg style="left:202px;top:88px;" width="16" height="16" viewBox="0 0 16 16"><path d="M2 2 L14 14 M14 2 L2 14" stroke="#2f7fe0" stroke-width="2.2"/></svg>
<svg style="left:227px;top:87px;" width="18" height="18" viewBox="0 0 18 18"><path d="M5 1.5 V11" stroke="#4aa3f5" stroke-width="3.2"/><path d="M0.8 9.5 L5 16.2 L9.2 9.5 Z" fill="#4aa3f5"/><rect x="10.20" y="2.20" width="6.20" height="1.1" fill="#35b035"/><rect x="10.65" y="4.30" width="5.30" height="1.1" fill="#35b035"/><rect x="11.10" y="6.40" width="4.40" height="1.1" fill="#35b035"/><rect x="11.55" y="8.50" width="3.50" height="1.1" fill="#35b035"/><rect x="12.00" y="10.60" width="2.60" height="1.1" fill="#35b035"/><rect x="12.45" y="12.70" width="1.70" height="1.1" fill="#35b035"/></svg>
<div style="left:251.7px;top:90.2px;width:12.2px;height:2px;background:#c6c6c6;"></div>
<div style="left:251.7px;top:94.9px;width:12.2px;height:2px;background:#c6c6c6;"></div>
<div style="left:251.7px;top:99.5px;width:12.2px;height:2px;background:#c6c6c6;"></div>
<svg style="left:271px;top:88px;" width="21" height="17" viewBox="0 0 21 17"><rect x="0.5" y="0.5" width="20" height="16" rx="3.5" fill="#2c55d8"/><path d="M14 7.5 H19 L16.5 11.5 Z" fill="#fff"/></svg>
<span class="t" style="top:89.03px;font-size:14.5px;font-weight:700;color:#fff;left:274px;">S</span>
<svg style="left:296px;top:89px;" width="15" height="15" viewBox="0 0 15 15"><path d="M7.5 1.5 V13.5 M1.5 7.5 H13.5" stroke="#8d8d8d" stroke-width="1.9"/><path d="M7.5 0 L4.6 3.8 H10.4 Z M7.5 15 L4.6 11.2 H10.4 Z M0 7.5 L3.8 4.6 V10.4 Z M15 7.5 L11.2 4.6 V10.4 Z" fill="#8d8d8d"/></svg>
<span class="t" style="top:89.36px;font-size:15.4px;font-weight:700;color:#8a8a8a;left:316.8px;transform:scaleX(1.0709);transform-origin:0 0;">X</span>
<svg style="left:347px;top:87px;" width="14" height="18" viewBox="0 0 14 18"><path d="M8 0.5 V17.5 M0 9 H14" stroke="#49d035" stroke-width="5"/></svg>
<div style="left:339px;top:82px;width:1.5px;height:1258px;background:#3f3f3f;"></div>
<div style="left:12px;top:113px;width:323px;height:1.5px;background:#474747;"></div>
<div style="left:12px;top:141px;width:323px;height:1.5px;background:#474747;"></div>
<span class="t" style="top:123.77px;font-size:11.5px;color:#f0f0f0;left:14.5px;transform:scaleX(0.9389);transform-origin:0 0;">Flag</span>
<span class="t" style="top:119.91px;font-size:17px;color:#9fb4c6;left:44.5px;transform:scaleX(0.8382);transform-origin:0 0;">Sym</span>
<svg style="left:188px;top:116px;" width="14" height="11" viewBox="0 0 14 11"><path d="M7 0.5 L13.5 10.5 H0.5 Z" fill="#62b6ea"/></svg>
<span class="t" style="top:122.33px;font-size:10.6px;font-weight:700;color:#f4f4f4;left:205.0px;transform:scaleX(0.8486);transform-origin:0 0;">50 Day HV Daily</span>
<div style="left:283px;top:114px;width:52px;height:27px;overflow:hidden">
<span class="t" style="top:6.61px;font-size:17px;color:#e6e6e6;left:3.0px;transform:scaleX(0.901);transform-origin:0 0;">% Chan</span>
</div>
<div style="left:41.2px;top:114px;width:1.4px;height:478px;background:#3d3d3d;"></div>
<div style="left:203px;top:114px;width:1.4px;height:478px;background:#3d3d3d;"></div>
<div style="left:283px;top:114px;width:1.4px;height:478px;background:#3d3d3d;"></div>
<svg style="left:20px;top:153.7px;" width="14" height="16" viewBox="0 0 14 16"><path d="M2 1 V14.5" stroke="#bcbcbc" stroke-width="1.5" fill="none"/><path d="M2.4 2 L11.6 6.3 V8.4 L2.4 9.2" stroke="#bcbcbc" stroke-width="1.3" fill="none" stroke-linejoin="round"/></svg>
<span class="t" style="top:148.40px;font-size:15px;color:#f2f2f2;left:45.5px;transform:scaleX(0.9895);transform-origin:0 0;">AA</span>
<span class="t" style="top:166.53px;font-size:11.3px;font-weight:700;color:#f4f4f4;left:45.3px;transform:scaleX(0.8623);transform-origin:0 0;">Alcoa Corporation</span>
<span class="t" style="top:156.03px;font-size:15.8px;color:#f4f4f4;left:243.3px;transform:scaleX(0.9157);transform-origin:0 0;">63.15</span>
<div style="left:300px;top:149.7px;width:35px;height:26px;overflow:hidden">
<span class="t" style="top:5.03px;font-size:16.5px;color:#2fcf3d;left:8.0px;">+2.68%</span>
</div>
<div style="left:12px;top:178.7px;width:323px;height:1.3px;background:#333;"></div>
<svg style="left:20px;top:191.2px;" width="14" height="16" viewBox="0 0 14 16"><path d="M2 1 V14.5" stroke="#bcbcbc" stroke-width="1.5" fill="none"/><path d="M2.4 2 L11.6 6.3 V8.4 L2.4 9.2" stroke="#bcbcbc" stroke-width="1.3" fill="none" stroke-linejoin="round"/></svg>
<span class="t" style="top:185.90px;font-size:15px;color:#f2f2f2;left:45.5px;transform:scaleX(0.9961);transform-origin:0 0;">AMR</span>
<span class="t" style="top:204.03px;font-size:11.3px;font-weight:700;color:#f4f4f4;left:45.3px;transform:scaleX(0.8581);transform-origin:0 0;">Alpha Metallurgical Resources In</span>
<span class="t" style="top:193.53px;font-size:15.8px;color:#f4f4f4;left:243.3px;transform:scaleX(0.9157);transform-origin:0 0;">78.46</span>
<div style="left:300px;top:187.2px;width:35px;height:26px;overflow:hidden">
<span class="t" style="top:5.03px;font-size:16.5px;color:#e02a2a;left:12.0px;">-2.88%</span>
</div>
<div style="left:12px;top:216.2px;width:323px;height:1.3px;background:#333;"></div>
<svg style="left:20px;top:228.7px;" width="14" height="16" viewBox="0 0 14 16"><path d="M2 1 V14.5" stroke="#bcbcbc" stroke-width="1.5" fill="none"/><path d="M2.4 2 L11.6 6.3 V8.4 L2.4 9.2" stroke="#bcbcbc" stroke-width="1.3" fill="none" stroke-linejoin="round"/></svg>
<span class="t" style="top:223.40px;font-size:15px;color:#f2f2f2;left:45.5px;transform:scaleX(0.9671);transform-origin:0 0;">ANDE</span>
<span class="t" style="top:241.53px;font-size:11.3px;font-weight:700;color:#f4f4f4;left:45.3px;transform:scaleX(0.8485);transform-origin:0 0;">Andersons Inc (The)</span>
<span class="t" style="top:231.03px;font-size:15.8px;color:#f4f4f4;left:243.3px;transform:scaleX(0.9436);transform-origin:0 0;">35.11</span>
<div style="left:300px;top:224.7px;width:35px;height:26px;overflow:hidden">
<span class="t" style="top:5.03px;font-size:16.5px;color:#2fcf3d;left:8.0px;">+1.98%</span>
</div>
<div style="left:12px;top:253.7px;width:323px;height:1.3px;background:#333;"></div>
<svg style="left:20px;top:266.2px;" width="14" height="16" viewBox="0 0 14 16"><path d="M2 1 V14.5" stroke="#bcbcbc" stroke-width="1.5" fill="none"/><path d="M2.4 2 L11.6 6.3 V8.4 L2.4 9.2" stroke="#bcbcbc" stroke-width="1.3" fill="none" stroke-linejoin="round"/></svg>
<span class="t" style="top:260.90px;font-size:15px;color:#f2f2f2;left:45.5px;transform:scaleX(0.9363);transform-origin:0 0;">ARCH</span>
<span class="t" style="top:279.03px;font-size:11.3px;font-weight:700;color:#f4f4f4;left:45.3px;transform:scaleX(0.8282);transform-origin:0 0;">Arch Resources, Inc</span>
<span class="t" style="top:268.53px;font-size:15.8px;color:#f4f4f4;left:243.3px;transform:scaleX(0.9157);transform-origin:0 0;">61.07</span>
<div style="left:300px;top:262.2px;width:35px;height:26px;overflow:hidden">
<span class="t" style="top:5.03px;font-size:16.5px;color:#e02a2a;left:12.0px;">-0.48%</span>
</div>
<div style="left:12px;top:292.2px;width:323px;height:37px;background:#22507f;"></div>
<div style="left:12px;top:291.2px;width:323px;height:1.3px;background:#333;"></div>
<div style="left:41px;top:291.7px;width:1.5px;height:37.5px;background:#3f648c;"></div>
<div style="left:203px;top:291.7px;width:1.5px;height:37.5px;background:#3f648c;"></div>
<div style="left:283px;top:291.7px;width:1.5px;height:37.5px;background:#3f648c;"></div>
<svg style="left:20px;top:303.7px;" width="14" height="16" viewBox="0 0 14 16"><path d="M2 1 V14.5" stroke="#bcbcbc" stroke-width="1.5" fill="none"/><path d="M2.4 2 L11.6 6.3 V8.4 L2.4 9.2" stroke="#bcbcbc" stroke-width="1.3" fill="none" stroke-linejoin="round"/></svg>
<span class="t" style="top:298.40px;font-size:15px;color:#f2f2f2;left:45.5px;transform:scaleX(0.9287);transform-origin:0 0;">CENX</span>
<span class="t" style="top:316.53px;font-size:11.3px;font-weight:700;color:#f4f4f4;left:45.3px;transform:scaleX(0.8726);transform-origin:0 0;">Century Aluminum Company</span>
<span class="t" style="top:306.03px;font-size:15.8px;color:#f4f4f4;left:243.3px;transform:scaleX(0.9157);transform-origin:0 0;">68.21</span>
<div style="left:300px;top:299.7px;width:35px;height:26px;overflow:hidden">
<span class="t" style="top:5.03px;font-size:16.5px;color:#e02a2a;left:12.0px;">-0.88%</span>
</div>
<div style="left:12px;top:328.7px;width:323px;height:1.3px;background:#333;"></div>
<svg style="left:20px;top:341.2px;" width="14" height="16" viewBox="0 0 14 16"><path d="M2 1 V14.5" stroke="#bcbcbc" stroke-width="1.5" fill="none"/><path d="M2.4 2 L11.6 6.3 V8.4 L2.4 9.2" stroke="#bcbcbc" stroke-width="1.3" fill="none" stroke-linejoin="round"/></svg>
<span class="t" style="top:335.90px;font-size:15px;color:#f2f2f2;left:45.5px;transform:scaleX(0.9411);transform-origin:0 0;">CHK</span>
<span class="t" style="top:354.03px;font-size:11.3px;font-weight:700;color:#f4f4f4;left:45.3px;transform:scaleX(0.8545);transform-origin:0 0;">Chesapeake Energy Corporation</span>
<span class="t" style="top:343.53px;font-size:15.8px;color:#f4f4f4;left:243.3px;transform:scaleX(0.9157);transform-origin:0 0;">42.65</span>
<div style="left:300px;top:337.2px;width:35px;height:26px;overflow:hidden">
<span class="t" style="top:5.03px;font-size:16.5px;color:#2fcf3d;left:8.0px;">+2.08%</span>
</div>
<div style="left:12px;top:366.2px;width:323px;height:1.3px;background:#333;"></div>
<svg style="left:20px;top:378.7px;" width="14" height="16" viewBox="0 0 14 16"><path d="M2 1 V14.5" stroke="#bcbcbc" stroke-width="1.5" fill="none"/><path d="M2.4 2 L11.6 6.3 V8.4 L2.4 9.2" stroke="#bcbcbc" stroke-width="1.3" fill="none" stroke-linejoin="round"/></svg>
<span class="t" style="top:373.40px;font-size:15px;color:#f2f2f2;left:45.5px;transform:scaleX(0.9547);transform-origin:0 0;">GRIN</span>
<span class="t" style="top:391.53px;font-size:11.3px;font-weight:700;color:#f4f4f4;left:45.3px;transform:scaleX(0.8658);transform-origin:0 0;">Grindrod Shipping Holdings Ltd</span>
<span class="t" style="top:381.03px;font-size:15.8px;color:#f4f4f4;left:243.3px;transform:scaleX(0.9157);transform-origin:0 0;">97.78</span>
<div style="left:300px;top:374.7px;width:35px;height:26px;overflow:hidden">
<span class="t" style="top:5.03px;font-size:16.5px;color:#2fcf3d;left:8.0px;">+8.18%</span>
</div>
<div style="left:12px;top:403.7px;width:323px;height:1.3px;background:#333;"></div>
<svg style="left:20px;top:416.2px;" width="14" height="16" viewBox="0 0 14 16"><path d="M2 1 V14.5" stroke="#bcbcbc" stroke-width="1.5" fill="none"/><path d="M2.4 2 L11.6 6.3 V8.4 L2.4 9.2" stroke="#bcbcbc" stroke-width="1.3" fill="none" stroke-linejoin="round"/></svg>
<span class="t" style="top:410.90px;font-size:15px;color:#f2f2f2;left:45.5px;transform:scaleX(0.8204);transform-origin:0 0;">RES</span>
<span class="t" style="top:429.03px;font-size:11.3px;font-weight:700;color:#f4f4f4;left:45.3px;transform:scaleX(0.8194);transform-origin:0 0;">RPC Inc</span>
<span class="t" style="top:418.53px;font-size:15.8px;color:#f4f4f4;left:243.3px;transform:scaleX(0.9157);transform-origin:0 0;">68.40</span>
<div style="left:300px;top:412.2px;width:35px;height:26px;overflow:hidden">
<span class="t" style="top:5.03px;font-size:16.5px;color:#e02a2a;left:12.0px;">-3.28%</span>
</div>
<div style="left:12px;top:441.2px;width:323px;height:1.3px;background:#333;"></div>
<svg style="left:20px;top:453.7px;" width="14" height="16" viewBox="0 0 14 16"><path d="M2 1 V14.5" stroke="#bcbcbc" stroke-width="1.5" fill="none"/><path d="M2.4 2 L11.6 6.3 V8.4 L2.4 9.2" stroke="#bcbcbc" stroke-width="1.3" fill="none" stroke-linejoin="round"/></svg>
<span class="t" style="top:448.40px;font-size:15px;color:#f2f2f2;left:45.5px;transform:scaleX(0.8123);transform-origin:0 0;">SST</span>
<span class="t" style="top:466.53px;font-size:11.3px;font-weight:700;color:#f4f4f4;left:45.3px;transform:scaleX(0.8477);transform-origin:0 0;">System1 Inc</span>
<div style="left:269.7px;top:466.7px;width:2.2px;height:2.2px;background:#e0e0e0;"></div>
<div style="left:273.0px;top:466.7px;width:2.2px;height:2.2px;background:#e0e0e0;"></div>
<div style="left:276.3px;top:466.7px;width:2.2px;height:2.2px;background:#e0e0e0;"></div>
<div style="left:300px;top:449.7px;width:35px;height:26px;overflow:hidden">
<span class="t" style="top:5.03px;font-size:16.5px;color:#e02a2a;left:12.0px;">-2.28%</span>
</div>
<div style="left:12px;top:478.7px;width:323px;height:1.3px;background:#333;"></div>
<svg style="left:20px;top:491.2px;" width="14" height="16" viewBox="0 0 14 16"><path d="M2 1 V14.5" stroke="#1f8ff5" stroke-width="1.5" fill="none"/><path d="M2.4 2 L11.6 6.3 V8.4 L2.4 9.2" stroke="#1f8ff5" stroke-width="1.3" fill="#1f8ff5" stroke-linejoin="round"/></svg>
<span class="t" style="top:485.90px;font-size:15px;color:#f2f2f2;left:45.5px;transform:scaleX(0.9751);transform-origin:0 0;">SUM</span>
<span class="t" style="top:504.03px;font-size:11.3px;font-weight:700;color:#f4f4f4;left:45.3px;transform:scaleX(0.87);transform-origin:0 0;">Summit Materials</span>
<span class="t" style="top:493.53px;font-size:15.8px;color:#f4f4f4;left:243.3px;transform:scaleX(0.9157);transform-origin:0 0;">52.63</span>
<div style="left:300px;top:487.2px;width:35px;height:26px;overflow:hidden">
<span class="t" style="top:5.03px;font-size:16.5px;color:#2fcf3d;left:8.0px;">+0.58%</span>
</div>
<div style="left:12px;top:516.2px;width:323px;height:1.3px;background:#333;"></div>
<svg style="left:20px;top:528.7px;" width="14" height="16" viewBox="0 0 14 16"><path d="M2 1 V14.5" stroke="#bcbcbc" stroke-width="1.5" fill="none"/><path d="M2.4 2 L11.6 6.3 V8.4 L2.4 9.2" stroke="#bcbcbc" stroke-width="1.3" fill="none" stroke-linejoin="round"/></svg>
<span class="t" style="top:523.40px;font-size:15px;color:#f2f2f2;left:45.5px;transform:scaleX(0.8755);transform-origin:0 0;">SXC</span>
<span class="t" style="top:541.53px;font-size:11.3px;font-weight:700;color:#f4f4f4;left:45.3px;transform:scaleX(0.8425);transform-origin:0 0;">Suncoke Energy Inc</span>
<span class="t" style="top:531.03px;font-size:15.8px;color:#f4f4f4;left:243.3px;transform:scaleX(0.9157);transform-origin:0 0;">46.30</span>
<div style="left:300px;top:524.7px;width:35px;height:26px;overflow:hidden">
<span class="t" style="top:5.03px;font-size:16.5px;color:#e02a2a;left:12.0px;">-1.68%</span>
</div>
<div style="left:12px;top:553.7px;width:323px;height:1.3px;background:#333;"></div>
<svg style="left:20px;top:566.2px;" width="14" height="16" viewBox="0 0 14 16"><path d="M2 1 V14.5" stroke="#bcbcbc" stroke-width="1.5" fill="none"/><path d="M2.4 2 L11.6 6.3 V8.4 L2.4 9.2" stroke="#bcbcbc" stroke-width="1.3" fill="none" stroke-linejoin="round"/></svg>
<span class="t" style="top:560.90px;font-size:15px;color:#f2f2f2;left:45.5px;transform:scaleX(0.8879);transform-origin:0 0;">TRGP</span>
<span class="t" style="top:579.03px;font-size:11.3px;font-weight:700;color:#f4f4f4;left:45.3px;transform:scaleX(0.8491);transform-origin:0 0;">Targa Resources Corp</span>
<span class="t" style="top:568.53px;font-size:15.8px;color:#f4f4f4;left:243.3px;transform:scaleX(0.9157);transform-origin:0 0;">27.34</span>
<div style="left:300px;top:562.2px;width:35px;height:26px;overflow:hidden">
<span class="t" style="top:5.03px;font-size:16.5px;color:#2fcf3d;left:8.0px;">+1.18%</span>
</div>
<div style="left:12px;top:591.2px;width:323px;height:1.3px;background:#333;"></div>
<div style="left:341px;top:110px;width:20px;height:40px;overflow:hidden">
<span class="t" style="top:10.61px;font-size:17px;color:#d8d8d8;left:8px;">C</span>
</div>
<div style="left:341px;top:141px;width:20px;height:1.5px;background:#2a2a2a;"></div>
<svg style="left:352px;top:146px;" width="9" height="16" viewBox="0 0 9 16"><path d="M8 1 L3 8 L8 15 Z" fill="#555"/></svg>
<div style="left:345px;top:179px;width:16px;height:1.3px;background:#1c1c1c;"></div>
<div style="left:345px;top:254px;width:16px;height:1.3px;background:#1c1c1c;"></div>
<div style="left:345px;top:404px;width:16px;height:1.3px;background:#1c1c1c;"></div>
<div style="left:345px;top:517px;width:16px;height:1.3px;background:#1c1c1c;"></div>
<div style="left:345px;top:592px;width:16px;height:1.3px;background:#1c1c1c;"></div>
<div style="left:345px;top:669px;width:16px;height:1.3px;background:#1c1c1c;"></div>
<div style="left:345px;top:743px;width:16px;height:1.3px;background:#1c1c1c;"></div>
<div style="left:345px;top:1010px;width:16px;height:1.3px;background:#1c1c1c;"></div>
<div style="left:345px;top:1043px;width:16px;height:1.3px;background:#1c1c1c;"></div>
<div style="left:345px;top:1078px;width:16px;height:1.3px;background:#1c1c1c;"></div>
<div style="left:345px;top:1132px;width:16px;height:1.3px;background:#1c1c1c;"></div>
<div style="left:345px;top:1229px;width:16px;height:1.3px;background:#1c1c1c;"></div>
<div style="left:345px;top:1283px;width:16px;height:1.3px;background:#1c1c1c;"></div>
<div style="left:343px;top:1168px;width:1.4px;height:35px;background:#c9c23a;"></div>
<div style="left:343px;top:1186px;width:4px;height:1.4px;background:#c9c23a;"></div>
<div style="left:354px;top:1131px;width:1.4px;height:46px;background:#c9c23a;"></div>
<div style="left:354px;top:1136px;width:4px;height:1.4px;background:#c9c23a;"></div>
<div style="left:350px;top:1167px;width:4px;height:1.4px;background:#c9c23a;"></div>
<svg style="left:344px;top:1304px;" width="17" height="26" viewBox="0 0 17 26"><path d="M1 4 H11 V1 L16 6 L11 11 V8 H1 Z" fill="#bdbdbd"/><path d="M16 13 H7 V10 L1 16 L7 22 V19 H16 Z" fill="#e8222b"/></svg>
<div style="left:343px;top:1326px;width:6px;height:1.5px;background:#ddd;"></div>
<span class="t" style="top:1339.23px;font-size:8px;font-style:italic;color:#3a3a3a;left:347px;">SY</span>
<div style="left:12px;top:1332px;width:323px;height:16px;background:#141414;"></div>
<span class="t" style="top:1334.59px;font-size:12.3px;color:#c9d9ea;left:19.3px;transform:scaleX(0.988);transform-origin:0 0;">5 of 12 Items in Personal WatchList</span>
<div style="left:12px;top:1347.5px;width:349px;height:2.5px;background:#5a5a5a;"></div>
<div style="left:361px;top:0px;width:2039px;height:76px;background:#fff;"></div>
<div style="left:360px;top:0px;width:1.5px;height:1350px;background:#1a1a1a;"></div>
<svg style="left:379px;top:3px;" width="20" height="20" viewBox="0 0 20 20"><path d="M17.5 10 H3.5 M9.5 3.5 L3 10 L9.5 16.5" stroke="#bcc0c4" stroke-width="2" fill="none"/></svg>
<svg style="left:419px;top:3px;" width="20" height="20" viewBox="0 0 20 20"><path d="M2.5 10 H16.5 M10.5 3.5 L17 10 L10.5 16.5" stroke="#bcc0c4" stroke-width="2" fill="none"/></svg>
<svg style="left:457px;top:2px;" width="22" height="22" viewBox="0 0 22 22"><path d="M18 11 A7.2 7.2 0 1 1 15.6 5.6" stroke="#50555a" stroke-width="2.4" fill="none"/><path d="M12.5 1.5 H19 V8 Z" fill="#50555a"/></svg>
<svg style="left:497px;top:1px;" width="24" height="24" viewBox="0 0 24 24"><path d="M3 12.5 L12 4 L21 12.5 M6 10.5 V21 H18 V10.5" stroke="#50555a" stroke-width="2.3" fill="none" stroke-linejoin="miter"/></svg>
<div style="left:537px;top:-8px;width:1713px;height:37px;border-radius:18.5px;background:#f1f3f4"></div>
<svg style="left:551px;top:3px;" width="15" height="18" viewBox="0 0 15 18"><rect x="1.5" y="7.5" width="12" height="9.5" rx="1.5" fill="#5f6368"/><path d="M4 8 V5.5 A3.5 3.5 0 0 1 11 5.5 V8" stroke="#5f6368" stroke-width="1.8" fill="none"/></svg>
<span class="t" style="top:4.36px;font-size:17.3px;color:#5f6368;left:579px;transform:scaleX(1.0092);transform-origin:0 0;">https:</span>
<span class="t" style="top:4.36px;font-size:17.3px;color:#5f6368;left:621.7px;transform:scaleX(1.4876);transform-origin:0 0;">//</span>
<span class="t" style="top:4.36px;font-size:17.3px;color:#202124;left:636px;transform:scaleX(1.0116);transform-origin:0 0;">davedavelandrycom-my.sharepoint.com</span>
<span class="t" style="top:4.36px;font-size:17.3px;color:#5f6368;left:945px;transform:scaleX(1.0847);transform-origin:0 0;">/:x:/r/</span>
<span class="t" style="top:4.36px;font-size:17.3px;color:#5f6368;left:986.7px;transform:scaleX(1.0299);transform-origin:0 0;">personal/</span>
<span class="t" style="top:4.36px;font-size:17.3px;color:#5f6368;left:1060px;transform:scaleX(0.9688);transform-origin:0 0;">dave_davelandry_com/</span>
<span class="t" style="top:4.36px;font-size:17.3px;color:#5f6368;left:1233.3px;transform:scaleX(1.0365);transform-origin:0 0;">_layouts/15/</span>
<span class="t" style="top:4.36px;font-size:17.3px;color:#5f6368;left:1330px;transform:scaleX(0.9943);transform-origin:0 0;">Doc.aspx</span>
<span class="t" style="top:4.36px;font-size:17.3px;color:#5f6368;left:1401.7px;transform:scaleX(0.9815);transform-origin:0 0;">?sourcedoc=</span>
<span class="t" style="top:4.36px;font-size:17.3px;color:#5f6368;left:1499.4px;transform:scaleX(0.881);transform-origin:0 0;">%7B4D0EA7B4</span>
<span class="t" style="top:4.36px;font-size:17.3px;color:#5f6368;left:1607px;transform:scaleX(1.1036);transform-origin:0 0;">-9C76</span>
<span class="t" style="top:4.36px;font-size:17.3px;color:#5f6368;left:1659px;transform:scaleX(0.9531);transform-origin:0 0;">-410E</span>
<span class="t" style="top:4.36px;font-size:17.3px;color:#5f6368;left:1703px;transform:scaleX(1.0399);transform-origin:0 0;">-A42B</span>
<span class="t" style="top:4.36px;font-size:17.3px;color:#5f6368;left:1753px;transform:scaleX(0.8817);transform-origin:0 0;">-07ECF2033860%7D</span>
<span class="t" style="top:4.36px;font-size:17.3px;color:#5f6368;left:1898px;transform:scaleX(1.2798);transform-origin:0 0;">&amp;file=</span>
<span class="t" style="top:4.36px;font-size:17.3px;color:#5f6368;left:1954px;transform:scaleX(0.9753);transform-origin:0 0;">Service111720.xlsb....</span>
<svg style="left:2136px;top:2px;" width="22" height="22" viewBox="0 0 22 22"><circle cx="9" cy="9" r="6.2" stroke="#50555a" stroke-width="1.9" fill="none"/><path d="M13.6 13.6 L19 19" stroke="#50555a" stroke-width="2.2"/><path d="M6 9 H12" stroke="#50555a" stroke-width="1.7"/></svg>
<svg style="left:2176px;top:2px;" width="23" height="22" viewBox="0 0 23 22"><path d="M3 9 V19.5 H17 V15" stroke="#50555a" stroke-width="1.8" fill="none"/><path d="M7 15 C7.5 10 11 7.5 15 7.5 V3.5 L21 9 L15 14.5 V10.8 C11.5 10.8 9 12 7 15 Z" stroke="#50555a" stroke-width="1.6" fill="none" stroke-linejoin="round"/></svg>
<svg style="left:2216px;top:1px;" width="23" height="23" viewBox="0 0 23 23"><path d="M11.5 3 L14 9 L20.5 9.5 L15.5 13.7 L17.1 20 L11.5 16.5 L5.9 20 L7.5 13.7 L2.5 9.5 L9 9 Z" stroke="#50555a" stroke-width="1.9" fill="none" stroke-linejoin="round"/></svg>
<svg style="left:2266px;top:2px;" width="22" height="22" viewBox="0 0 22 22"><circle cx="11" cy="11" r="10.2" fill="#15c39a"/><path d="M15.5 6.6 A6 6 0 1 0 16.8 12.6 H11.5" stroke="#e9fff8" stroke-width="2" fill="none"/></svg>
<svg style="left:2306px;top:2px;" width="22" height="22" viewBox="0 0 22 22"><circle cx="11" cy="11" r="10.4" fill="#1c3fd1"/><circle cx="11" cy="11" r="5.4" fill="#fff"/><circle cx="11" cy="11" r="2.5" fill="#1c3fd1"/></svg>
<svg style="left:2345px;top:1px;" width="24" height="24" viewBox="0 0 24 24"><path d="M9.5 3.5 a2.4 2.4 0 0 1 4.8 0 V5.5 H19 V10.5 h1.6 a2.4 2.4 0 0 1 0 4.8 H19 V20.5 H13.6 V19 a2.3 2.3 0 0 0 -4.6 0 V20.5 H4 V15.3 h1.3 a2.4 2.4 0 0 0 0 -4.8 H4 V5.5 H9.5 Z" fill="#50555a"/></svg>
<div style="left:2389px;top:3px;width:20px;height:18px;border:2.5px solid #3a3d40;box-sizing:border-box;border-radius:1px"></div>
<div style="left:380px;top:44px;width:18px;height:18px">
<span class="t" style="top:-5.00px;font-size:21.5px;font-weight:700;color:#111;left:2.2px;">a</span>
<svg style="left:0;top:11.8px" width="18" height="8" viewBox="0 0 18 8"><path d="M1 1.5 C5 5.5 12 5.5 16 2" stroke="#f90" stroke-width="1.8" fill="none" stroke-linecap="round"/><path d="M13.5 1 L16.8 1.4 L15.6 4.4" stroke="#f90" stroke-width="1.4" fill="none"/></svg>
</div>
<span class="t" style="top:44.83px;font-size:15.8px;color:#3c4043;left:409.3px;transform:scaleX(0.9322);transform-origin:0 0;">Amazon.com - Your...</span>
<svg style="left:570px;top:46.5px;" width="20" height="14" viewBox="0 0 20 14"><rect x="0" y="0" width="20" height="14" rx="3.6" fill="#f00"/><path d="M8 3.8 L13.2 7 L8 10.2 Z" fill="#fff"/></svg>
<div style="left:610px;top:43px;width:20px;height:19.5px;background:#14254a;"></div>
<div style="left:610px;top:43px;width:20px;height:20px;overflow:hidden">
<span class="t" style="top:2.21px;font-size:17px;color:#fff;left:1.8px;transform:scaleX(0.7641);transform-origin:0 0;">ST</span>
</div>
<span class="t" style="top:44.83px;font-size:15.8px;color:#3c4043;left:640.0px;transform:scaleX(0.9051);transform-origin:0 0;">Position Sizing Calc...</span>
<svg style="left:799px;top:46px;" width="19" height="14" viewBox="0 0 19 14"><path d="M1.5 13 V2 L9.5 8.2 L17.5 2 V13" stroke="#ea4335" stroke-width="3" fill="none" stroke-linejoin="miter"/><path d="M1.5 13.5 V4" stroke="#4285f4" stroke-width="3"/><path d="M17.5 13.5 V4" stroke="#34a853" stroke-width="3"/><path d="M16 3 L18.9 0.9 V4.5" fill="#fbbc04"/></svg>
<span class="t" style="top:44.83px;font-size:15.8px;color:#3c4043;left:829.3px;transform:scaleX(0.9261);transform-origin:0 0;">Gmail - [Markets lis...</span>
<svg style="left:987.3px;top:46.5px;" width="20" height="14" viewBox="0 0 20 14"><rect x="0" y="0" width="20" height="14" rx="3.6" fill="#f00"/><path d="M8 3.8 L13.2 7 L8 10.2 Z" fill="#fff"/></svg>
<svg style="left:1027.5px;top:42.5px;" width="20" height="20" viewBox="0 0 20 20"><circle cx="10" cy="10" r="9.8" fill="#1877f2"/><path d="M11 19.6 V12 H13.4 L13.8 9.2 H11 V7.6 C11 6.6 11.4 6.1 12.6 6.1 H13.9 V3.7 C13.4 3.6 12.6 3.5 11.8 3.5 C9.6 3.5 8.2 4.8 8.2 7.2 V9.2 H6 V12 H8.2 V19.6 Z" fill="#fff"/></svg>
<div style="left:1067.7px;top:43px;width:19.6px;height:19.6px;background:#0a0a0a;"></div>
<span class="t" style="top:49.15px;font-size:7.5px;font-weight:700;color:#ddd;left:1072.5px;">JC</span>
<span class="t" style="top:44.83px;font-size:15.8px;color:#3c4043;left:1098.3px;transform:scaleX(0.8936);transform-origin:0 0;">The Akrasia Effect:...</span>
<svg style="left:1248.5px;top:43px;" width="20" height="19" viewBox="0 0 20 19"><ellipse cx="10" cy="10.8" rx="9.6" ry="8" fill="#e02b20"/><ellipse cx="7" cy="8.5" rx="3" ry="2" fill="#f0655c"/><path d="M5.5 3.6 L9 4.6 L10 1.2 L11.3 4.6 L15 3.4 L12.3 6 L10 5.2 L7.8 6.2 Z" fill="#2e8b2e"/></svg>
<span class="t" style="top:44.83px;font-size:15.8px;color:#3c4043;left:1279.3px;transform:scaleX(0.9433);transform-origin:0 0;">TomatoTimer</span>
<svg style="left:1388.3px;top:43px;" width="16" height="19" viewBox="0 0 16 19"><path d="M1 2.5 Q1 1 2.5 1 H11.5 Q13 1 13 2.5 V15 H15 V18 H1 Z" fill="#f7d774"/><path d="M13 15 H15 V18 H13 Z" fill="#e9c04c"/></svg>
<span class="t" style="top:44.83px;font-size:15.8px;color:#3c4043;left:1416.7px;transform:scaleX(0.9613);transform-origin:0 0;">New folder</span>
<div style="left:1510px;top:43px;width:20px;height:19.6px;background:#0a0a0a;"></div>
<svg style="left:1510px;top:43px;" width="20" height="20" viewBox="0 0 20 20"><path d="M10 6 L15 12.5 H5 Z" fill="#2fd6a3"/></svg>
<span class="t" style="top:44.83px;font-size:15.8px;color:#3c4043;left:1540.7px;transform:scaleX(0.914);transform-origin:0 0;">Premarket</span>
<div style="left:1630px;top:44px;width:18px;height:18px">
<span class="t" style="top:-5.00px;font-size:21.5px;font-weight:700;color:#111;left:2.2px;">a</span>
<svg style="left:0;top:11.8px" width="18" height="8" viewBox="0 0 18 8"><path d="M1 1.5 C5 5.5 12 5.5 16 2" stroke="#f90" stroke-width="1.8" fill="none" stroke-linecap="round"/><path d="M13.5 1 L16.8 1.4 L15.6 4.4" stroke="#f90" stroke-width="1.4" fill="none"/></svg>
</div>
<span class="t" style="top:44.83px;font-size:15.8px;color:#3c4043;left:1659.3px;transform:scaleX(0.915);transform-origin:0 0;">Amazon.com Assoc...</span>
<svg style="left:1818.5px;top:42.5px;" width="20.5" height="20.5" viewBox="0 0 20.5 20.5"><circle cx="10.2" cy="10.2" r="9.2" fill="#fff" stroke="#21759b" stroke-width="1.9"/><path d="M3.6 7 L7.4 17 L10 9.6 L12.8 17 L16.4 7.2 M2.8 7 H6.4 M8 7 H12 M14.6 7 H17.6" stroke="#21759b" stroke-width="1.8" fill="none"/></svg>
<span class="t" style="top:44.83px;font-size:15.8px;color:#3c4043;left:1849.3px;transform:scaleX(0.946);transform-origin:0 0;">MMMastery Infusio...</span>
<svg style="left:2008.8px;top:42.5px;" width="20" height="20" viewBox="0 0 20 20"><circle cx="10" cy="10" r="9.8" fill="#4a90e8"/><path d="M11 18.5 V11.6 H13.2 L13.5 9 H11 V7.5 C11 6.6 11.4 6.2 12.4 6.2 H13.6 V4 C13.2 3.9 12.5 3.8 11.7 3.8 C9.7 3.8 8.5 5 8.5 7.2 V9 H6.5 V11.6 H8.5 V18.5 Z" fill="#fff"/></svg>
<span class="t" style="top:44.83px;font-size:15.8px;color:#3c4043;left:2039.3px;transform:scaleX(0.8957);transform-origin:0 0;">Stock Screener - Ga...</span>
<svg style="left:2304px;top:46px;" width="12" height="12" viewBox="0 0 12 12"><path d="M1 1.5 L5 6 L1 10.5 M6.5 1.5 L10.5 6 L6.5 10.5" stroke="#4a4d51" stroke-width="1.8" fill="none"/></svg>
<div style="left:2327.5px;top:43px;width:1.5px;height:20px;background:#d0d2d5;"></div>
<svg style="left:2343.8px;top:43px;" width="16" height="19" viewBox="0 0 16 19"><path d="M1 2.5 Q1 1 2.5 1 H11.5 Q13 1 13 2.5 V15 H15 V18 H1 Z" fill="#f7d774"/><path d="M13 15 H15 V18 H13 Z" fill="#e9c04c"/></svg>
<span class="t" style="top:44.83px;font-size:15.8px;color:#3c4043;left:2371.8px;transform:scaleX(0.93);transform-origin:0 0;">Other bookmarks</span>
<div style="left:361px;top:76px;width:2039px;height:45px;background:#1e7a40;"></div>
<div style="left:376px;top:91.3px;width:3px;height:3px;background:#fff;"></div>
<div style="left:382px;top:91.3px;width:3px;height:3px;background:#fff;"></div>
<div style="left:388px;top:91.3px;width:3px;height:3px;background:#fff;"></div>
<div style="left:376px;top:97.3px;width:3px;height:3px;background:#fff;"></div>
<div style="left:382px;top:97.3px;width:3px;height:3px;background:#fff;"></div>
<div style="left:388px;top:97.3px;width:3px;height:3px;background:#fff;"></div>
<div style="left:376px;top:103.3px;width:3px;height:3px;background:#fff;"></div>
<div style="left:382px;top:103.3px;width:3px;height:3px;background:#fff;"></div>
<div style="left:388px;top:103.3px;width:3px;height:3px;background:#fff;"></div>
<span class="t" style="top:91.79px;font-size:15.6px;font-weight:700;color:#fff;left:414.3px;transform:scaleX(0.8096);transform-origin:0 0;">Excel</span>
<span class="t" style="top:92.30px;font-size:15px;color:#fff;left:470.0px;transform:scaleX(0.8259);transform-origin:0 0;">Service111720.xlsb  -  Saved</span>
<svg style="left:645px;top:95px;" width="11" height="8" viewBox="0 0 11 8"><path d="M1.5 1.5 L5.5 5.5 L9.5 1.5" stroke="#e8f3ec" stroke-width="1.4" fill="none"/></svg>
<div style="left:1213px;top:84px;width:439px;height:29.5px;border-radius:3px;background:#c2d8ca"></div>
<svg style="left:1230px;top:91px;" width="16" height="16" viewBox="0 0 16 16"><circle cx="9.5" cy="6" r="4.3" stroke="#30533e" stroke-width="1.4" fill="none"/><path d="M6.4 9.2 L1.8 14" stroke="#30533e" stroke-width="1.5"/></svg>
<span class="t" style="top:92.45px;font-size:14px;color:#38604a;left:1256.7px;transform:scaleX(0.9032);transform-origin:0 0;">Search (Alt + Q)</span>
<div style="left:361.5px;top:121px;width:2038.5px;height:120px;background:#f3f2f1;"></div>
<span class="t" style="top:129.28px;font-size:14.2px;color:#3b3a39;left:383.2px;transform:scaleX(0.8174);transform-origin:0 0;">File</span>
<span class="t" style="top:129.28px;font-size:14.2px;font-weight:700;color:#252423;left:438.1px;transform:scaleX(0.9075);transform-origin:0 0;-webkit-text-stroke:0">Home</span>
<div style="left:438px;top:147.3px;width:36px;height:2.7px;background:#1e7a40;border-radius:1.5px"></div>
<span class="t" style="top:129.28px;font-size:14.2px;color:#3b3a39;left:503.5px;transform:scaleX(0.8926);transform-origin:0 0;">Insert</span>
<span class="t" style="top:129.28px;font-size:14.2px;color:#3b3a39;left:565.3px;transform:scaleX(0.8863);transform-origin:0 0;">Draw</span>
<span class="t" style="top:129.28px;font-size:14.2px;color:#3b3a39;left:624.5px;transform:scaleX(0.8803);transform-origin:0 0;">Page Layout</span>
<span class="t" style="top:129.28px;font-size:14.2px;color:#3b3a39;left:725.3px;transform:scaleX(0.8837);transform-origin:0 0;">Formulas</span>
<span class="t" style="top:129.28px;font-size:14.2px;color:#3b3a39;left:808.0px;transform:scaleX(0.8699);transform-origin:0 0;">Data</span>
<span class="t" style="top:129.28px;font-size:14.2px;color:#3b3a39;left:864.0px;transform:scaleX(0.8583);transform-origin:0 0;">Review</span>
<span class="t" style="top:129.28px;font-size:14.2px;color:#3b3a39;left:933.3px;transform:scaleX(0.9163);transform-origin:0 0;">View</span>
<span class="t" style="top:129.28px;font-size:14.2px;color:#3b3a39;left:990.8px;transform:scaleX(0.9379);transform-origin:0 0;">Automate</span>
<span class="t" style="top:129.28px;font-size:14.2px;color:#3b3a39;left:1077.7px;transform:scaleX(0.9107);transform-origin:0 0;">Help</span>
<div style="left:1138px;top:125.5px;width:92.5px;height:25.5px;background:#fff;border:1px solid #d2d0ce;border-radius:3px;box-sizing:border-box"></div>
<svg style="left:1146px;top:130px;" width="16" height="16" viewBox="0 0 16 16"><path d="M2 14 L3 10 L11.5 1.5 L14.3 4.3 L5.8 12.8 Z" stroke="#1e7145" stroke-width="1.4" fill="none" stroke-linejoin="round"/><path d="M2 14 L5.2 13" stroke="#1e7145" stroke-width="1.4"/></svg>
<span class="t" style="top:130.48px;font-size:14.2px;color:#1e7145;left:1165.6px;transform:scaleX(0.9442);transform-origin:0 0;">Editing</span>
<svg style="left:1213.0px;top:135.5px;" width="10" height="6.5" viewBox="0 0 10 6.5"><path d="M1 1 L5.0 5.0 L9 1" stroke="#1e7145" stroke-width="1.3" fill="none"/></svg>
<div style="left:2223.5px;top:125.2px;width:69.2px;height:26px;background:#1e7a40;border-radius:2.5px"></div>
<svg style="left:2231.5px;top:130px;" width="15" height="16" viewBox="0 0 15 16"><path d="M4 6 H1.5 V14.5 H11.5 V11" stroke="#fff" stroke-width="1.4" fill="none"/><path d="M4.5 11 C5 7.5 7.5 6 10 6 V3 L14 7 L10 11 V8.5 C7.8 8.5 6 9 4.5 11 Z" stroke="#fff" stroke-width="1.3" fill="none" stroke-linejoin="round"/></svg>
<span class="t" style="top:130.95px;font-size:14px;font-weight:700;color:#fff;left:2251.2px;transform:scaleX(0.8636);transform-origin:0 0;">Share</span>
<div style="left:2300.2px;top:125.2px;width:110px;height:26px;background:#fff;border:1px solid #c8c6c4;border-radius:2.5px;box-sizing:border-box"></div>
<svg style="left:2309px;top:131px;" width="15" height="14" viewBox="0 0 15 14"><path d="M1.5 1.5 H13.5 V9.5 H6 L3 12.5 V9.5 H1.5 Z" stroke="#2b5c40" stroke-width="1.4" fill="none" stroke-linejoin="round"/></svg>
<span class="t" style="top:130.95px;font-size:14px;color:#2f6045;left:2328.5px;transform:scaleX(0.9351);transform-origin:0 0;">Comments</span>
<div style="left:399.2px;top:155px;width:1.3px;height:83px;background:#d9d7d5;"></div>
<div style="left:554.1px;top:155px;width:1.3px;height:83px;background:#d9d7d5;"></div>
<div style="left:785.9px;top:155px;width:1.3px;height:83px;background:#d9d7d5;"></div>
<div style="left:865.3px;top:160px;width:1.3px;height:64px;background:#d9d7d5;"></div>
<div style="left:994.6px;top:155px;width:1.3px;height:83px;background:#d9d7d5;"></div>
<div style="left:1133.3px;top:155px;width:1.3px;height:83px;background:#d9d7d5;"></div>
<div style="left:1312.1px;top:155px;width:1.3px;height:83px;background:#d9d7d5;"></div>
<div style="left:1443.1px;top:155px;width:1.3px;height:83px;background:#d9d7d5;"></div>
<div style="left:1629.7px;top:155px;width:1.3px;height:83px;background:#d9d7d5;"></div>
<div style="left:1689.2px;top:155px;width:1.3px;height:83px;background:#d9d7d5;"></div>
<span class="t" style="top:226.78px;font-size:10.3px;color:#6f6e6c;left:369.3px;transform:scaleX(0.8893);transform-origin:0 0;">Undo</span>
<span class="t" style="top:226.78px;font-size:10.3px;color:#6f6e6c;left:456.8px;transform:scaleX(0.9187);transform-origin:0 0;">Clipboard</span>
<span class="t" style="top:226.78px;font-size:10.3px;color:#6f6e6c;left:661.3px;transform:scaleX(0.8685);transform-origin:0 0;">Font</span>
<span class="t" style="top:226.78px;font-size:10.3px;color:#6f6e6c;left:868.5px;transform:scaleX(0.9322);transform-origin:0 0;">Alignment</span>
<span class="t" style="top:226.78px;font-size:10.3px;color:#6f6e6c;left:1047.2px;transform:scaleX(0.9007);transform-origin:0 0;">Number</span>
<span class="t" style="top:226.78px;font-size:10.3px;color:#6f6e6c;left:1210.6px;transform:scaleX(0.8272);transform-origin:0 0;">Styles</span>
<span class="t" style="top:226.78px;font-size:10.3px;color:#6f6e6c;left:1367.6px;transform:scaleX(0.8211);transform-origin:0 0;">Cells</span>
<span class="t" style="top:226.78px;font-size:10.3px;color:#6f6e6c;left:1522.7px;transform:scaleX(0.8794);transform-origin:0 0;">Editing</span>
<span class="t" style="top:226.78px;font-size:10.3px;color:#6f6e6c;left:1643.6px;transform:scaleX(0.8525);transform-origin:0 0;">Analysis</span>
<svg style="left:371px;top:168px;" width="18" height="18" viewBox="0 0 18 18"><path d="M5 2 L2 7.5 L8 8.5" stroke="#444" stroke-width="1.5" fill="none"/><path d="M2.5 7.2 C6 3.5 13 4 14 9 C14.6 12.5 11 15 7.5 17" stroke="#444" stroke-width="1.5" fill="none"/></svg>
<svg style="left:371px;top:195px;" width="18" height="18" viewBox="0 0 18 18"><path d="M13 2 L16 7.5 L10 8.5" stroke="#c2c0be" stroke-width="1.5" fill="none"/><path d="M15.5 7.2 C12 3.5 5 4 4 9 C3.4 12.5 7 15 10.5 17" stroke="#c2c0be" stroke-width="1.5" fill="none"/></svg>
<svg style="left:414px;top:158px;" width="28" height="32" viewBox="0 0 28 32"><rect x="1.5" y="5" width="19" height="23" rx="1.5" stroke="#e8a33d" stroke-width="1.8" fill="none"/><path d="M6 5 V2.8 H9 C9 0.4 13 0.4 13 2.8 H16 V5" stroke="#6b6967" stroke-width="1.3" fill="#f3f2f1"/><rect x="12.5" y="12.5" width="13.5" height="17" fill="#fafafa" stroke="#6b6967" stroke-width="1.4"/></svg>
<span class="t" style="top:189.89px;font-size:12.3px;color:#3b3a39;left:414.1px;transform:scaleX(0.7981);transform-origin:0 0;">Paste</span>
<svg style="left:421.6px;top:210.5px;" width="8" height="5.5" viewBox="0 0 8 5.5"><path d="M1 1 L4.0 4.0 L7 1" stroke="#444" stroke-width="1.3" fill="none"/></svg>
<svg style="left:454.5px;top:159.5px;" width="12" height="15" viewBox="0 0 12 15"><path d="M3 1 L8.2 10.5 M9 1 L3.8 10.5" stroke="#4a4947" stroke-width="1.2"/><circle cx="2.8" cy="12.2" r="2" stroke="#2b7cd3" stroke-width="1.2" fill="none"/><circle cx="9.2" cy="12.2" r="2" stroke="#2b7cd3" stroke-width="1.2" fill="none"/></svg>
<span class="t" style="top:161.51px;font-size:11.8px;color:#3b3a39;left:472.0px;transform:scaleX(0.915);transform-origin:0 0;">Cut</span>
<svg style="left:452.5px;top:181.5px;" width="16" height="15" viewBox="0 0 16 15"><path d="M1 1 H7 L10 4 V11.5 H1 Z" stroke="#4a4947" stroke-width="1.2" fill="none"/><path d="M5 4.5 H11.5 L14.5 7.5 V14 H5 Z" stroke="#4a4947" stroke-width="1.2" fill="#f3f2f1"/></svg>
<span class="t" style="top:184.21px;font-size:11.8px;color:#3b3a39;left:472.0px;transform:scaleX(0.9005);transform-origin:0 0;">Copy</span>
<svg style="left:452px;top:203px;" width="16" height="16" viewBox="0 0 16 16"><path d="M8.5 6.5 L13.5 1.5 L15 3 L10 8" stroke="#4a4947" stroke-width="1.6" fill="#4a4947"/><path d="M5 6 L10.5 11 L6.5 15 L1 9.5 Z" fill="#e8823c"/><path d="M6 5 L11.5 10.2" stroke="#4a4947" stroke-width="1.6"/></svg>
<span class="t" style="top:206.31px;font-size:11.8px;color:#3b3a39;left:472.0px;transform:scaleX(0.9291);transform-origin:0 0;">Format Painter</span>
<div style="left:562.5px;top:167px;width:167.5px;height:21.5px;background:#fff;border:1.2px solid #7a7876;box-sizing:border-box"></div>
<div style="left:681.4px;top:167px;width:1.2px;height:21.5px;background:#7a7876;"></div>
<span class="t" style="top:171.97px;font-size:12.2px;color:#3b3a39;left:568.5px;transform:scaleX(0.886);transform-origin:0 0;">Times New Roman</span>
<svg style="left:672.55px;top:175.62px;" width="7.5" height="5.25" viewBox="0 0 7.5 5.25"><path d="M1 1 L3.75 3.75 L6.5 1" stroke="#444" stroke-width="1.3" fill="none"/></svg>
<span class="t" style="top:171.97px;font-size:12.2px;color:#3b3a39;left:687.2px;transform:scaleX(0.8477);transform-origin:0 0;">20</span>
<svg style="left:720.05px;top:175.62px;" width="7.5" height="5.25" viewBox="0 0 7.5 5.25"><path d="M1 1 L3.75 3.75 L6.5 1" stroke="#444" stroke-width="1.3" fill="none"/></svg>
<span class="t" style="top:168.26px;font-size:16px;color:#4a4947;left:738.0px;transform:scaleX(1.0307);transform-origin:0 0;">A</span>
<svg style="left:748px;top:168.5px;" width="6" height="4" viewBox="0 0 6 4"><path d="M0.8 3.4 L3 1 L5.2 3.4" stroke="#444" stroke-width="1" fill="none"/></svg>
<span class="t" style="top:169.95px;font-size:14px;color:#4a4947;left:761.3px;transform:scaleX(0.9638);transform-origin:0 0;">A</span>
<svg style="left:769.5px;top:168.5px;" width="6" height="4" viewBox="0 0 6 4"><path d="M0.8 0.8 L3 3.2 L5.2 0.8" stroke="#2b7cd3" stroke-width="1" fill="none"/></svg>
<div style="left:562.7px;top:192.3px;width:22.2px;height:22.2px;background:#dddbd9;"></div>
<span class="t" style="top:196.30px;font-size:13px;font-weight:700;color:#252423;left:571.0px;transform:scaleX(0.8204);transform-origin:0 0;">B</span>
<span class="t s" style="top:195.99px;font-size:13.5px;font-style:italic;color:#4a4947;left:595.25px;transform:scaleX(0.9824);transform-origin:0 0;">I</span>
<span class="t" style="top:195.72px;font-size:12.5px;color:#4a4947;left:615.2px;transform:scaleX(0.8864);transform-origin:0 0;">U</span>
<div style="left:614.8px;top:208.7px;width:8.800000000000068px;height:1.2px;background:#4a4947;"></div>
<span class="t" style="top:195.72px;font-size:12.5px;color:#4a4947;left:638.3px;transform:scaleX(0.9086);transform-origin:0 0;">D</span>
<div style="left:637.6px;top:208px;width:9.600000000000023px;height:1px;background:#4a4947;"></div>
<div style="left:637.6px;top:210.2px;width:9.600000000000023px;height:1px;background:#4a4947;"></div>
<span class="t" style="top:197.77px;font-size:11.5px;color:#4a4947;left:658.5px;transform:scaleX(0.9384);transform-origin:0 0;">ab</span>
<div style="left:657.6px;top:203.8px;width:14.0px;height:1.1px;background:#4a4947;"></div>
<svg style="left:680px;top:197px;" width="14" height="14" viewBox="0 0 14 14"><rect x="0.7" y="0.7" width="12.6" height="12.6" stroke="#8a8886" stroke-width="1" fill="none" stroke-dasharray="1.5 1.2"/><path d="M7 0.5 V13.5 M0.5 7 H13.5" stroke="#6b6967" stroke-width="1.1"/></svg>
<svg style="left:698.25px;top:202.12px;" width="7.5" height="5.25" viewBox="0 0 7.5 5.25"><path d="M1 1 L3.75 3.75 L6.5 1" stroke="#444" stroke-width="1.3" fill="none"/></svg>
<svg style="left:711.5px;top:195px;" width="15" height="17" viewBox="0 0 15 17"><path d="M6.5 1.5 L12 7 L7 11.5 L2 6.8 Z" stroke="#4a4947" stroke-width="1.2" fill="none"/><path d="M12.8 8.5 C13.8 10 14 11 13 11.6 C12 11 12 10 12.8 8.5 Z" fill="#2b7cd3"/><rect x="0.5" y="13.3" width="14" height="3.2" fill="#ffee00"/></svg>
<svg style="left:729.55px;top:202.12px;" width="7.5" height="5.25" viewBox="0 0 7.5 5.25"><path d="M1 1 L3.75 3.75 L6.5 1" stroke="#444" stroke-width="1.3" fill="none"/></svg>
<span class="t" style="top:195.00px;font-size:13px;color:#4a4947;left:746.3px;transform:scaleX(1.1533);transform-origin:0 0;">A</span>
<div style="left:744px;top:207.3px;width:14.7px;height:3.7px;background:#e81123;"></div>
<svg style="left:761.55px;top:202.12px;" width="7.5" height="5.25" viewBox="0 0 7.5 5.25"><path d="M1 1 L3.75 3.75 L6.5 1" stroke="#444" stroke-width="1.3" fill="none"/></svg>
<div style="left:839.2px;top:155px;width:21.3px;height:22.7px;background:#e1dfdd;"></div>
<div style="left:798.5px;top:159.0px;width:13px;height:1.5px;background:#5f5e5c;"></div>
<div style="left:798.5px;top:162.4px;width:9px;height:1.5px;background:#5f5e5c;"></div>
<div style="left:798.5px;top:165.8px;width:13px;height:1.5px;background:#5f5e5c;"></div>
<div style="left:820.8px;top:161.5px;width:13px;height:1.5px;background:#5f5e5c;"></div>
<div style="left:820.8px;top:164.9px;width:9px;height:1.5px;background:#5f5e5c;"></div>
<div style="left:820.8px;top:168.3px;width:13px;height:1.5px;background:#5f5e5c;"></div>
<div style="left:843.5px;top:164.5px;width:13px;height:1.5px;background:#5f5e5c;"></div>
<div style="left:843.5px;top:167.9px;width:9px;height:1.5px;background:#5f5e5c;"></div>
<div style="left:843.5px;top:171.3px;width:13px;height:1.5px;background:#5f5e5c;"></div>
<div style="left:798.5px;top:182.0px;width:13px;height:1.5px;background:#5f5e5c;"></div>
<div style="left:798.5px;top:185.4px;width:9px;height:1.5px;background:#5f5e5c;"></div>
<div style="left:798.5px;top:188.8px;width:13px;height:1.5px;background:#5f5e5c;"></div>
<div style="left:798.5px;top:192.2px;width:9px;height:1.5px;background:#5f5e5c;"></div>
<div style="left:820.8px;top:182.0px;width:13px;height:1.5px;background:#5f5e5c;"></div>
<div style="left:822.8px;top:185.4px;width:9px;height:1.5px;background:#5f5e5c;"></div>
<div style="left:820.8px;top:188.8px;width:13px;height:1.5px;background:#5f5e5c;"></div>
<div style="left:822.8px;top:192.2px;width:9px;height:1.5px;background:#5f5e5c;"></div>
<div style="left:843.5px;top:182.0px;width:13px;height:1.5px;background:#5f5e5c;"></div>
<div style="left:847.5px;top:185.4px;width:9px;height:1.5px;background:#5f5e5c;"></div>
<div style="left:843.5px;top:188.8px;width:13px;height:1.5px;background:#5f5e5c;"></div>
<div style="left:847.5px;top:192.2px;width:9px;height:1.5px;background:#5f5e5c;"></div>
<div style="left:798.5px;top:205.0px;width:13px;height:1.4px;background:#5f5e5c;"></div>
<div style="left:803.5px;top:208.4px;width:8px;height:1.4px;background:#5f5e5c;"></div>
<div style="left:803.5px;top:211.8px;width:8px;height:1.4px;background:#5f5e5c;"></div>
<div style="left:798.5px;top:215.2px;width:13px;height:1.4px;background:#5f5e5c;"></div>
<svg style="left:797.5px;top:207.5px;" width="6" height="6" viewBox="0 0 6 6"><path d="M5.5 3 H0.8 M2.8 0.8 L0.6 3 L2.8 5.2" stroke="#2b7cd3" stroke-width="1.1" fill="none"/></svg>
<div style="left:820.8px;top:205.0px;width:13px;height:1.4px;background:#5f5e5c;"></div>
<div style="left:826.8px;top:208.4px;width:7px;height:1.4px;background:#5f5e5c;"></div>
<div style="left:826.8px;top:211.8px;width:7px;height:1.4px;background:#5f5e5c;"></div>
<div style="left:820.8px;top:215.2px;width:13px;height:1.4px;background:#5f5e5c;"></div>
<svg style="left:820px;top:207.5px;" width="6" height="6" viewBox="0 0 6 6"><path d="M0.5 3 H5.2 M3.2 0.8 L5.4 3 L3.2 5.2" stroke="#2b7cd3" stroke-width="1.1" fill="none"/></svg>
<span class="t" style="top:169.88px;font-size:9px;font-weight:700;color:#4a4947;left:875.5px;transform:scaleX(0.9045);transform-origin:0 0;">ab</span>
<svg style="left:874.5px;top:177px;" width="14" height="9" viewBox="0 0 14 9"><path d="M0.8 1 V4.5 H11 C13.2 4.5 13.2 7.5 11 7.5 H6" stroke="#2b7cd3" stroke-width="1.2" fill="none"/><path d="M7.8 5.6 L5.4 7.5 L7.8 9.4" stroke="#2b7cd3" stroke-width="1.1" fill="none"/><path d="M0.8 7.5 H3" stroke="#4a4947" stroke-width="1.2"/></svg>
<span class="t" style="top:173.01px;font-size:11.8px;color:#3b3a39;left:893.3px;transform:scaleX(0.911);transform-origin:0 0;">Wrap Text</span>
<svg style="left:873.3px;top:196.5px;" width="15" height="14" viewBox="0 0 15 14"><rect x="0.7" y="0.7" width="13.6" height="12.6" stroke="#4a4947" stroke-width="1.1" fill="none"/><rect x="0.7" y="4.2" width="13.6" height="5.6" fill="#cfe3f7" stroke="#2b7cd3" stroke-width="1"/><path d="M3 7 H12 M4.5 5.6 L3 7 L4.5 8.4 M10.5 5.6 L12 7 L10.5 8.4" stroke="#2b7cd3" stroke-width="0.9" fill="none"/><path d="M7.5 0.7 V4 M7.5 10 V13.3" stroke="#4a4947" stroke-width="1"/></svg>
<span class="t" style="top:198.91px;font-size:11.8px;color:#3b3a39;left:893.3px;transform:scaleX(0.9508);transform-origin:0 0;">Merge &amp; Center</span>
<svg style="left:976.25px;top:202.43px;" width="7.5" height="5.25" viewBox="0 0 7.5 5.25"><path d="M1 1 L3.75 3.75 L6.5 1" stroke="#444" stroke-width="1.3" fill="none"/></svg>
<div style="left:1003px;top:166.8px;width:119px;height:21.5px;background:#fff;border:1.2px solid #7a7876;box-sizing:border-box"></div>
<span class="t" style="top:171.97px;font-size:12.2px;color:#3b3a39;left:1007.8px;transform:scaleX(0.9218);transform-origin:0 0;">Number</span>
<svg style="left:1111.85px;top:175.62px;" width="7.5" height="5.25" viewBox="0 0 7.5 5.25"><path d="M1 1 L3.75 3.75 L6.5 1" stroke="#444" stroke-width="1.3" fill="none"/></svg>
<span class="t" style="top:196.60px;font-size:15px;color:#4a4947;left:1009.3px;transform:scaleX(0.9233);transform-origin:0 0;">$</span>
<svg style="left:1024.05px;top:202.12px;" width="7.5" height="5.25" viewBox="0 0 7.5 5.25"><path d="M1 1 L3.75 3.75 L6.5 1" stroke="#444" stroke-width="1.3" fill="none"/></svg>
<span class="t" style="top:195.88px;font-size:15.5px;color:#4a4947;left:1038.6px;transform:scaleX(1.0741);transform-origin:0 0;">%</span>
<span class="t" style="top:194.65px;font-size:14px;font-weight:700;color:#4a4947;left:1065.0px;transform:scaleX(0.9507);transform-origin:0 0;">9</span>
<svg style="left:1083px;top:197px;" width="16" height="15" viewBox="0 0 16 15"><path d="M7 3.3 H1 M3 1.2 L0.8 3.3 L3 5.4" stroke="#2b7cd3" stroke-width="1.1" fill="none"/></svg>
<span class="t" style="top:197.65px;font-size:7.5px;font-weight:700;color:#4a4947;left:1090px;">.0</span>
<span class="t" style="top:205.65px;font-size:7.5px;font-weight:700;color:#4a4947;left:1086px;">.00</span>
<svg style="left:1106px;top:197px;" width="16" height="15" viewBox="0 0 16 15"><path d="M1 10.3 H7 M5 8.2 L7.2 10.3 L5 12.4" stroke="#2b7cd3" stroke-width="1.1" fill="none"/></svg>
<span class="t" style="top:197.65px;font-size:7.5px;font-weight:700;color:#4a4947;left:1110px;">.00</span>
<span class="t" style="top:205.65px;font-size:7.5px;font-weight:700;color:#4a4947;left:1114px;">.0</span>
<svg style="left:1162px;top:161.5px;" width="28" height="22" viewBox="0 0 28 22"><rect x="0.7" y="0.7" width="26.6" height="20.6" fill="#fff" stroke="#6b6967" stroke-width="1.1"/><path d="M0.7 7.5 H27.3 M0.7 14.3 H27.3 M9.5 0.7 V21.3 M18.5 0.7 V21.3" stroke="#8a8886" stroke-width="0.9"/><rect x="2.5" y="1.8" width="15" height="5" fill="#e8475f"/><rect x="5" y="8.5" width="8" height="5" fill="#5b9bd5"/><rect x="2.5" y="15.2" width="15" height="5" fill="#e8475f"/></svg>
<span class="t" style="top:191.14px;font-size:12px;color:#3b3a39;left:1147.4px;transform:scaleX(0.9611);transform-origin:0 0;">Conditional</span>
<span class="t" style="top:205.94px;font-size:12px;color:#3b3a39;left:1143.4px;transform:scaleX(0.9573);transform-origin:0 0;">Formatting</span>
<svg style="left:1200.05px;top:209.93px;" width="7.5" height="5.25" viewBox="0 0 7.5 5.25"><path d="M1 1 L3.75 3.75 L6.5 1" stroke="#444" stroke-width="1.3" fill="none"/></svg>
<svg style="left:1225px;top:161.5px;" width="30" height="24" viewBox="0 0 30 24"><rect x="0.7" y="0.7" width="26" height="20" fill="#fff" stroke="#6b6967" stroke-width="1.1"/><path d="M0.7 7.3 H26.7 M0.7 14 H26.7 M9.3 0.7 V20.7 M18 0.7 V20.7" stroke="#8a8886" stroke-width="0.9"/><rect x="9.8" y="7.8" width="16.4" height="12.4" fill="#4a8fdc"/><path d="M27.5 8 L18.5 18" stroke="#4a4947" stroke-width="2.6"/><path d="M27.5 8 L18.5 18" stroke="#f3f2f1" stroke-width="1"/><path d="M12 22 C11 18.5 15 15.5 18.5 17.5 C19.5 20.5 15.5 23.5 12 22 Z" fill="#2b7cd3"/></svg>
<span class="t" style="top:191.14px;font-size:12px;color:#3b3a39;left:1214.4px;transform:scaleX(0.9015);transform-origin:0 0;">Format As</span>
<span class="t" style="top:205.94px;font-size:12px;color:#3b3a39;left:1220.5px;transform:scaleX(0.8818);transform-origin:0 0;">Table</span>
<svg style="left:1247.05px;top:209.93px;" width="7.5" height="5.25" viewBox="0 0 7.5 5.25"><path d="M1 1 L3.75 3.75 L6.5 1" stroke="#444" stroke-width="1.3" fill="none"/></svg>
<svg style="left:1271.4px;top:161.5px;" width="30" height="24" viewBox="0 0 30 24"><rect x="0.7" y="0.7" width="25" height="17" fill="#fff" stroke="#6b6967" stroke-width="1.1"/><rect x="3" y="3.8" width="20.5" height="11" fill="#5ba4ec"/><path d="M26.8 7 L18.5 17.5" stroke="#4a4947" stroke-width="2.6"/><path d="M26.8 7 L18.5 17.5" stroke="#f3f2f1" stroke-width="1"/><path d="M10.5 22 C9.5 18.5 13.5 15.5 17 17.5 C18 20.5 14 23.5 10.5 22 Z" fill="#2b7cd3"/></svg>
<span class="t" style="top:191.14px;font-size:12px;color:#3b3a39;left:1271.4px;transform:scaleX(0.8294);transform-origin:0 0;">Styles</span>
<svg style="left:1280.95px;top:210.62px;" width="7.5" height="5.25" viewBox="0 0 7.5 5.25"><path d="M1 1 L3.75 3.75 L6.5 1" stroke="#444" stroke-width="1.3" fill="none"/></svg>
<svg style="left:1324px;top:161.5px;" width="30" height="24" viewBox="0 0 30 24"><rect x="1.2" y="1" width="26" height="19.5" fill="#fff" stroke="#6b6967" stroke-width="1.1"/><path d="M1.2 7.5 H27.2 M1.2 14 H27.2 M9.8 1 V20.5 M18.5 1 V20.5" stroke="#8a8886" stroke-width="0.9"/><rect x="4" y="7.9" width="24.5" height="5.8" fill="#4a8fdc"/><path d="M0 10.8 H9 M3.4 7.4 L0.2 10.8 L3.4 14.2" stroke="#2b7cd3" stroke-width="1.4" fill="none"/></svg>
<span class="t" style="top:191.14px;font-size:12px;color:#3b3a39;left:1324.7px;transform:scaleX(0.9163);transform-origin:0 0;">Insert</span>
<svg style="left:1334.05px;top:210.62px;" width="7.5" height="5.25" viewBox="0 0 7.5 5.25"><path d="M1 1 L3.75 3.75 L6.5 1" stroke="#444" stroke-width="1.3" fill="none"/></svg>
<svg style="left:1362px;top:161.5px;" width="30" height="24" viewBox="0 0 30 24"><rect x="1.2" y="1" width="26" height="19.5" fill="#fff" stroke="#6b6967" stroke-width="1.1"/><path d="M1.2 7.5 H27.2 M1.2 14 H27.2 M9.8 1 V20.5 M18.5 1 V20.5" stroke="#8a8886" stroke-width="0.9"/><rect x="1.6" y="7.9" width="17" height="5.8" fill="#4a8fdc"/><path d="M19.5 6.5 L28 15.5 M28 6.5 L19.5 15.5" stroke="#e8475f" stroke-width="1.5"/></svg>
<span class="t" style="top:191.14px;font-size:12px;color:#3b3a39;left:1360.8px;transform:scaleX(0.8907);transform-origin:0 0;">Delete</span>
<svg style="left:1371.95px;top:210.62px;" width="7.5" height="5.25" viewBox="0 0 7.5 5.25"><path d="M1 1 L3.75 3.75 L6.5 1" stroke="#444" stroke-width="1.3" fill="none"/></svg>
<svg style="left:1401px;top:161.5px;" width="30" height="24" viewBox="0 0 30 24"><rect x="1.2" y="1" width="26" height="19.5" fill="#fff" stroke="#6b6967" stroke-width="1.1"/><path d="M1.2 7.5 H27.2 M1.2 14 H27.2 M9.8 1 V20.5 M18.5 1 V20.5" stroke="#8a8886" stroke-width="0.9"/><rect x="10.2" y="7.9" width="8" height="5.8" fill="#4a8fdc"/><rect x="1.6" y="7.9" width="8" height="5.8" fill="#9cc3ee"/><rect x="18.9" y="7.9" width="8" height="5.8" fill="#9cc3ee"/></svg>
<div style="left:1408.5px;top:158.3px;width:13.5px;height:1.6px;background:#4a8fdc;"></div>
<span class="t" style="top:191.14px;font-size:12px;color:#3b3a39;left:1397.8px;transform:scaleX(0.9104);transform-origin:0 0;">Format</span>
<svg style="left:1410.45px;top:210.62px;" width="7.5" height="5.25" viewBox="0 0 7.5 5.25"><path d="M1 1 L3.75 3.75 L6.5 1" stroke="#444" stroke-width="1.3" fill="none"/></svg>
<svg style="left:1456px;top:159.5px;" width="13" height="15" viewBox="0 0 13 15"><path d="M11.5 3 V1 H1.5 L7 7.3 L1.5 13.7 H11.5 V11.7" stroke="#3b3a39" stroke-width="1.4" fill="none"/></svg>
<span class="t" style="top:161.51px;font-size:11.8px;color:#3b3a39;left:1474.3px;transform:scaleX(0.921);transform-origin:0 0;">AutoSum</span>
<svg style="left:1522.95px;top:164.93px;" width="7.5" height="5.25" viewBox="0 0 7.5 5.25"><path d="M1 1 L3.75 3.75 L6.5 1" stroke="#444" stroke-width="1.3" fill="none"/></svg>
<svg style="left:1454.5px;top:181px;" width="16" height="15" viewBox="0 0 16 15"><path d="M8.5 1 L14.8 7.3 L8 14 H5 L1.2 10.2 Z" stroke="#a43fb8" stroke-width="1.5" fill="none" stroke-linejoin="round"/><path d="M5 5 L11 11" stroke="#a43fb8" stroke-width="1.4"/></svg>
<span class="t" style="top:184.21px;font-size:11.8px;color:#3b3a39;left:1474.3px;transform:scaleX(0.8758);transform-origin:0 0;">Clear</span>
<svg style="left:1502.05px;top:187.62px;" width="7.5" height="5.25" viewBox="0 0 7.5 5.25"><path d="M1 1 L3.75 3.75 L6.5 1" stroke="#444" stroke-width="1.3" fill="none"/></svg>
<span class="t" style="top:160.50px;font-size:13px;color:#2b7cd3;left:1543.5px;transform:scaleX(1.0379);transform-origin:0 0;">A</span>
<span class="t" style="top:174.50px;font-size:13px;color:#4a4947;left:1544.0px;transform:scaleX(1.0449);transform-origin:0 0;">Z</span>
<svg style="left:1553px;top:164px;" width="17" height="18" viewBox="0 0 17 18"><path d="M1 1 H16 L10.5 8 V16.5 L6.5 13.5 V8 Z" stroke="#4a4947" stroke-width="1.3" fill="none" stroke-linejoin="round"/></svg>
<span class="t" style="top:191.14px;font-size:12px;color:#3b3a39;left:1541.2px;transform:scaleX(0.9236);transform-origin:0 0;">Sort &amp;</span>
<span class="t" style="top:205.94px;font-size:12px;color:#3b3a39;left:1539.7px;transform:scaleX(0.8663);transform-origin:0 0;">Filter</span>
<svg style="left:1564.55px;top:209.93px;" width="7.5" height="5.25" viewBox="0 0 7.5 5.25"><path d="M1 1 L3.75 3.75 L6.5 1" stroke="#444" stroke-width="1.3" fill="none"/></svg>
<svg style="left:1584px;top:159.5px;" width="29" height="27" viewBox="0 0 29 27"><circle cx="18.5" cy="9.5" r="8" stroke="#4a4947" stroke-width="1.5" fill="none"/><path d="M12.8 15.3 L1.2 26" stroke="#4a4947" stroke-width="1.8"/></svg>
<span class="t" style="top:191.14px;font-size:12px;color:#3b3a39;left:1583.5px;transform:scaleX(0.9141);transform-origin:0 0;">Find &amp;</span>
<span class="t" style="top:205.94px;font-size:12px;color:#3b3a39;left:1579.8px;transform:scaleX(0.8486);transform-origin:0 0;">Select</span>
<svg style="left:1609.25px;top:209.93px;" width="7.5" height="5.25" viewBox="0 0 7.5 5.25"><path d="M1 1 L3.75 3.75 L6.5 1" stroke="#444" stroke-width="1.3" fill="none"/></svg>
<svg style="left:1645px;top:157.5px;" width="31" height="30" viewBox="0 0 31 30"><rect x="0.7" y="0.7" width="29" height="28" fill="#fff" stroke="#4a4947" stroke-width="1.2"/><path d="M0.7 4 H29.7" stroke="#4a4947" stroke-width="1.2"/><path d="M0.7 14 H30 M0.7 22 H30 M8 4 V29 M22 4 V29" stroke="#a19f9d" stroke-width="0.9"/><circle cx="14.5" cy="13.5" r="8.2" fill="#fff" stroke="#4a4947" stroke-width="1.3"/><circle cx="14.5" cy="13.5" r="5.6" fill="none" stroke="#8a8886" stroke-width="0.9"/><rect x="11" y="12" width="2.2" height="5" fill="#4a8fdc"/><rect x="13.6" y="9.5" width="2.2" height="7.5" fill="#4a8fdc"/><rect x="16.2" y="11" width="2.2" height="6" fill="#4a8fdc"/><path d="M20.5 19.5 L29 28.5" stroke="#4a4947" stroke-width="1.8"/></svg>
<span class="t" style="top:191.14px;font-size:12px;color:#3b3a39;left:1641.4px;transform:scaleX(0.8666);transform-origin:0 0;">Analyze</span>
<span class="t" style="top:205.94px;font-size:12px;color:#3b3a39;left:1648.5px;transform:scaleX(0.8755);transform-origin:0 0;">Data</span>
<div style="left:361.5px;top:239.3px;width:2038.5px;height:1.5px;background:#d6d4d2;"></div>
<div style="left:361.5px;top:240.8px;width:2038.5px;height:2px;background:#ebeae9;"></div>
<div style="left:361.5px;top:242.8px;width:2038.5px;height:25.2px;background:#f3f2f1;"></div>
<div style="left:366.2px;top:244.7px;width:113.3px;height:22.3px;background:#fff;border:1px solid #e1dfdd;box-sizing:border-box"></div>
<span class="t" style="top:249.97px;font-size:12.2px;color:#444;left:368.6px;transform:scaleX(1.0283);transform-origin:0 0;">M17</span>
<svg style="left:469.05px;top:253.93px;" width="7.5" height="5.25" viewBox="0 0 7.5 5.25"><path d="M1 1 L3.75 3.75 L6.5 1" stroke="#444" stroke-width="1.3" fill="none"/></svg>
<div style="left:484px;top:245.2px;width:27.8px;height:21.5px;background:#fff;border:1px solid #e8e6e4;box-sizing:border-box"></div>
<span class="t s" style="top:248.78px;font-size:14px;font-style:italic;color:#444;left:493.5px;transform:scaleX(0.9065);transform-origin:0 0;">f</span>
<span class="t s" style="top:253.26px;font-size:9px;font-style:italic;color:#444;left:499.15px;transform:scaleX(1.2886);transform-origin:0 0;">x</span>
<div style="left:515.5px;top:243.5px;width:1885px;height:23px;background:#fff;"></div>
</div></body></html>
